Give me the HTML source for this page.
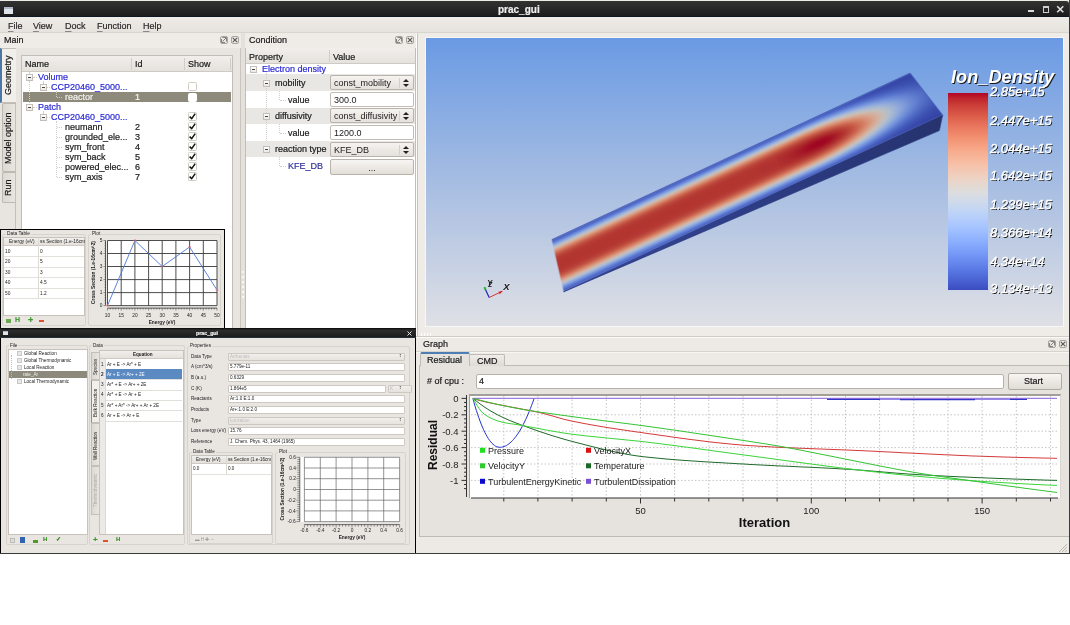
<!DOCTYPE html>
<html><head><meta charset="utf-8">
<style>
*{box-sizing:border-box;margin:0;padding:0}
html,body{width:1070px;height:625px;overflow:hidden;background:#fff;font-family:"Liberation Sans",sans-serif;font-size:9px;color:#1a1a1a}
.a{position:absolute}
.t{position:absolute;white-space:nowrap;line-height:10px;-webkit-text-stroke:0.2px currentColor}
#win{will-change:transform;left:0;top:0;width:1070px;height:554px;background:#edeae6;border-right:1px solid #3a3a3a;border-bottom:1px solid #3a3a3a;overflow:hidden}
#title{left:0;top:1px;width:1069px;height:16px;border-radius:0 3px 0 0;background:linear-gradient(#333,#1c1c1c);border-bottom:1px solid #0f1820}
#menu{left:0;top:17px;width:1069px;height:16px;background:linear-gradient(#efece8,#e6e2dd);border-bottom:1px solid #d8d4ce}
.menuitem{top:21px;color:#2a2a2a}
.u{text-decoration:underline;text-decoration-color:#888;text-underline-offset:1.5px}
.dockt{font-size:9px}
.blue{color:#2b2bd6}
.hdr{background:linear-gradient(#f1efec,#e5e1dc);border-bottom:1px solid #cfcac4}
.white{background:#fff}
.chk{position:absolute;width:9px;height:9px;background:#fff;border:1px solid #cfcbc5;border-radius:1.5px}
.exp{position:absolute;width:7px;height:7px;border:1px solid #a8a49d;background:linear-gradient(#fff,#ebe9e6)}
.exp:after{content:"";position:absolute;left:1px;top:2px;width:3px;height:1px;background:#222}
.dotv{position:absolute;width:1px;border-left:1px dotted #d2cec8}
.doth{position:absolute;height:1px;border-top:1px dotted #d2cec8}
.vt{transform-origin:0 0;transform:rotate(-90deg)}
.fl,.cl{width:8px;height:8px;border:1px solid #a9a49d;border-radius:2px;background:#ece9e5}
.exp{border-color:#c3bfb8!important}
.exp:after{background:#444!important}
.chk svg{position:absolute;left:-1px;top:-1px}
.combo,.inp,.btn{position:absolute;left:330px;width:84px;height:15px;border:1px solid #b9b3ab;border-radius:2px}
.combo{background:linear-gradient(#f5f3f0,#e5e1dc)}
.combo:before{content:"";position:absolute;right:13px;top:2px;width:1px;height:10px;background:#d4cfc8}
.ud{position:absolute;right:4px;top:3px;width:6px;height:8px}
.ud:before{content:"";position:absolute;left:0;top:0;border-left:3px solid transparent;border-right:3px solid transparent;border-bottom:3px solid #222}
.ud:after{content:"";position:absolute;left:0;top:5px;border-left:3px solid transparent;border-right:3px solid transparent;border-top:3px solid #222}
.fl svg,.cl svg{position:absolute;left:0;top:0}
.combo span,.inp span{position:absolute;left:3px;top:2px;line-height:10px;white-space:nowrap}
.inp{background:#fff;border-color:#c2bcb4}
.btn{background:linear-gradient(#f7f5f2,#e2ded8);height:16px}
.btn span{position:absolute;left:0;width:100%;text-align:center;top:3px;line-height:10px}
.arr{position:absolute;right:4px;width:0;height:0;border-left:3px solid transparent;border-right:3px solid transparent}
#face{position:absolute;left:0;top:0;width:1000px;height:100px;transform-origin:0 0;filter:blur(1.5px)}
#face i{position:absolute;top:0;height:100px;display:block}
.vtk{font-style:italic;color:#fff;text-shadow:1px 1px 0.6px #1a1a1a;-webkit-text-stroke:0.35px #fff}
.lab{left:990px;font-size:13px;line-height:14px}
.gd{stroke:#c4c4c4;stroke-width:1;stroke-dasharray:1.5 2}
.lg{font-family:"Liberation Sans";font-size:9px;fill:#222}
.tk{font-family:"Liberation Sans";font-size:9.5px;fill:#222}
.ax{font-family:"Liberation Sans";font-size:13px;font-weight:bold;fill:#111}
.sm{font-size:4.8px;font-family:"Liberation Sans";fill:#222;color:#222;-webkit-text-stroke:0}
.grp{border:1px solid #d6d2cc;border-radius:2px}
.xs{font-size:4.6px;line-height:7px;color:#222;-webkit-text-stroke:0}
.fic{width:5px;height:5px;background:#e8e8e8;border:0.5px solid #c8c8c8}
.vtab{left:91px;width:8px;background:linear-gradient(90deg,#dcd8d2,#e9e6e1);border:1px solid #c4bfb8;border-right:none}
</style></head><body>
<div id="win" class="a">
  <div id="title" class="a">
    <div class="a" style="left:4px;top:6px;width:9px;height:7px;background:#dfe3ea;border-top:2px solid #aeb8c8"></div>
    <div class="t" style="left:498px;top:3px;font-weight:bold;font-size:10px;color:#eee;line-height:12px">prac_gui</div>
    <div class="a" style="left:1028px;top:9px;width:6px;height:2px;background:#d8d8d8"></div>
    <div class="a" style="left:1042.5px;top:4.5px;width:6px;height:7px;border:1px solid #d0d0d0;border-top-width:2px"></div>
    <svg class="a" style="left:1056px;top:4px" width="9" height="9"><path d="M1.2,1.2 L7.3,7.3 M7.3,1.2 L1.2,7.3" stroke="#e0e0e0" stroke-width="1.6"/></svg>
  </div>
  <div id="menu" class="a"></div>
  <div class="t menuitem" style="left:8px"><span class="u">F</span>ile</div>
  <div class="t menuitem" style="left:33px"><span class="u">V</span>iew</div>
  <div class="t menuitem" style="left:65px"><span class="u">D</span>ock</div>
  <div class="t menuitem" style="left:97px"><span class="u">F</span>unction</div>
  <div class="t menuitem" style="left:143px"><span class="u">H</span>elp</div>

  <!-- MAIN DOCK -->
  <div class="a" style="left:0;top:33px;width:241px;height:15px;background:#efece8"></div>
  <div class="t" style="left:4px;top:35px">Main</div>
  <div class="a fl" style="left:220px;top:36px"><svg width="6" height="6"><path d="M1.5,0.5 h4 v4 M0.5,2 v3.5 h3.5 M1.5,4.5 L5,1" stroke="#777" stroke-width="0.9" fill="none"/></svg></div>
  <div class="a cl" style="left:231px;top:36px"><svg width="6" height="6"><path d="M0.8,0.8 L5.2,5.2 M5.2,0.8 L0.8,5.2" stroke="#555" stroke-width="1.1"/></svg></div>
  <div class="a" style="left:0;top:48px;width:241px;height:290px;background:#e8e5e0;border-right:1px solid #c9c4be"></div>
  <!-- tabs -->
  <div class="a" style="left:15px;top:48px;width:1px;height:290px;background:#c4bfb8"></div>
  <div class="a" style="left:2px;top:103px;width:13px;height:69px;background:linear-gradient(90deg,#dcd8d2,#e9e6e1);border:1px solid #bdb8b1;border-right:none;border-radius:2px 0 0 2px"></div>
  <div class="a" style="left:2px;top:172px;width:13px;height:31px;background:linear-gradient(90deg,#dcd8d2,#e9e6e1);border:1px solid #bdb8b1;border-right:none;border-radius:2px 0 0 2px"></div>
  <div class="a" style="left:0;top:48px;width:16px;height:55px;background:#f1efeb;border-left:2px solid #4a78a6;border-top:1px solid #c4bfb8;border-bottom:1px solid #c4bfb8"></div>
  <div class="t vt" style="left:3px;top:95px">Geometry</div>
  <div class="t vt" style="left:3px;top:164px">Model option</div>
  <div class="t vt" style="left:3px;top:196px">Run</div>
  <!-- tree -->
  <div class="a white" style="left:21px;top:55px;width:212px;height:290px;border:1px solid #c2bdb6"></div>
  <div class="a hdr" style="left:22px;top:56px;width:210px;height:16px"></div>
  <div class="a" style="left:131px;top:58px;width:1px;height:12px;background:#d2cdc7"></div>
  <div class="a" style="left:184px;top:58px;width:1px;height:12px;background:#d2cdc7"></div>
  <div class="t" style="left:25px;top:59px">Name</div>
  <div class="t" style="left:135px;top:59px">Id</div>
  <div class="t" style="left:188px;top:59px">Show</div><div class="a" style="left:230px;top:58px;width:1px;height:12px;background:#d2cdc7"></div>
  <div class="a" style="left:23px;top:92px;width:208px;height:10px;background:#8d8a7b"></div>
  <div class="t blue" style="left:38px;top:72px">Volume</div>
  <div class="t blue" style="left:51px;top:82px">CCP20460_5000...</div>
  <div class="t" style="left:65px;top:92px;color:#f4f4f0">reactor</div>
  <div class="t" style="left:135px;top:92px;color:#f4f4f0">1</div>
  <div class="t blue" style="left:38px;top:102px">Patch</div>
  <div class="t blue" style="left:51px;top:112px">CCP20460_5000...</div>
  <div class="t" style="left:65px;top:122px">neumann</div>
  <div class="t" style="left:135px;top:122px">2</div>
  <div class="t" style="left:65px;top:132px">grounded_ele...</div>
  <div class="t" style="left:135px;top:132px">3</div>
  <div class="t" style="left:65px;top:142px">sym_front</div>
  <div class="t" style="left:135px;top:142px">4</div>
  <div class="t" style="left:65px;top:152px">sym_back</div>
  <div class="t" style="left:135px;top:152px">5</div>
  <div class="t" style="left:65px;top:162px">powered_elec...</div>
  <div class="t" style="left:135px;top:162px">6</div>
  <div class="t" style="left:65px;top:172px">sym_axis</div>
  <div class="t" style="left:135px;top:172px">7</div>
  <div class="dotv" style="left:29px;top:72px;height:2px"></div>
  <div class="dotv" style="left:29px;top:81px;height:22px"></div>
  <div class="doth" style="left:33px;top:77px;width:4px"></div>
  <div class="doth" style="left:33px;top:107px;width:4px"></div>
  <div class="dotv" style="left:43px;top:81px;height:2px"></div>
  <div class="doth" style="left:47px;top:87px;width:3px"></div>
  <div class="dotv" style="left:43px;top:111px;height:2px"></div>
  <div class="doth" style="left:47px;top:117px;width:3px"></div>
  <div class="dotv" style="left:56px;top:91px;height:6px"></div>
  <div class="doth" style="left:57px;top:97px;width:5px"></div>
  <div class="dotv" style="left:56px;top:121px;height:56px"></div>
  <div class="doth" style="left:57px;top:127px;width:5px"></div>
  <div class="doth" style="left:57px;top:137px;width:5px"></div>
  <div class="doth" style="left:57px;top:147px;width:5px"></div>
  <div class="doth" style="left:57px;top:157px;width:5px"></div>
  <div class="doth" style="left:57px;top:167px;width:5px"></div>
  <div class="doth" style="left:57px;top:177px;width:5px"></div>
  <div class="exp" style="left:26px;top:73.5px"></div>
  <div class="exp" style="left:40px;top:83.5px"></div>
  <div class="exp" style="left:26px;top:103.5px"></div>
  <div class="exp" style="left:40px;top:113.5px"></div>
  <div class="chk" style="left:188px;top:82px"></div>
  <div class="chk" style="left:188px;top:92.5px;border-color:#fff"></div>
  <div class="chk ck" style="left:188px;top:112px"><svg width="9" height="9"><path d="M1.6,4.6 L3.7,6.6 L7.2,1.6" stroke="#111" stroke-width="1.5" fill="none"/></svg></div>
  <div class="chk ck" style="left:188px;top:122px"><svg width="9" height="9"><path d="M1.6,4.6 L3.7,6.6 L7.2,1.6" stroke="#111" stroke-width="1.5" fill="none"/></svg></div>
  <div class="chk ck" style="left:188px;top:132px"><svg width="9" height="9"><path d="M1.6,4.6 L3.7,6.6 L7.2,1.6" stroke="#111" stroke-width="1.5" fill="none"/></svg></div>
  <div class="chk ck" style="left:188px;top:142px"><svg width="9" height="9"><path d="M1.6,4.6 L3.7,6.6 L7.2,1.6" stroke="#111" stroke-width="1.5" fill="none"/></svg></div>
  <div class="chk ck" style="left:188px;top:152px"><svg width="9" height="9"><path d="M1.6,4.6 L3.7,6.6 L7.2,1.6" stroke="#111" stroke-width="1.5" fill="none"/></svg></div>
  <div class="chk ck" style="left:188px;top:162px"><svg width="9" height="9"><path d="M1.6,4.6 L3.7,6.6 L7.2,1.6" stroke="#111" stroke-width="1.5" fill="none"/></svg></div>
  <div class="chk ck" style="left:188px;top:172px"><svg width="9" height="9"><path d="M1.6,4.6 L3.7,6.6 L7.2,1.6" stroke="#111" stroke-width="1.5" fill="none"/></svg></div>

  <!-- CONDITION DOCK -->
  <div class="a" style="left:241px;top:33px;width:4px;height:305px;background:#e4e0db"></div><div class="a" style="left:242px;top:271px;width:1.5px;height:2px;background:#f8f7f5"></div><div class="a" style="left:242px;top:276px;width:1.5px;height:2px;background:#f8f7f5"></div><div class="a" style="left:242px;top:281px;width:1.5px;height:2px;background:#f8f7f5"></div><div class="a" style="left:242px;top:286px;width:1.5px;height:2px;background:#f8f7f5"></div><div class="a" style="left:242px;top:291px;width:1.5px;height:2px;background:#f8f7f5"></div><div class="a" style="left:242px;top:296px;width:1.5px;height:2px;background:#f8f7f5"></div>
  <div class="a" style="left:245px;top:33px;width:171px;height:15px;background:#efece8"></div>
  <div class="t" style="left:249px;top:35px">Condition</div>
  <div class="a fl" style="left:395px;top:36px"><svg width="6" height="6"><path d="M1.5,0.5 h4 v4 M0.5,2 v3.5 h3.5 M1.5,4.5 L5,1" stroke="#777" stroke-width="0.9" fill="none"/></svg></div>
  <div class="a cl" style="left:406px;top:36px"><svg width="6" height="6"><path d="M0.8,0.8 L5.2,5.2 M5.2,0.8 L0.8,5.2" stroke="#555" stroke-width="1.1"/></svg></div>
  <div class="a white" style="left:245px;top:48px;width:171px;height:290px;border-left:1px solid #c2bdb6;border-right:1px solid #c2bdb6"></div>
  <div class="a hdr" style="left:246px;top:48px;width:169px;height:16px"></div>
  <div class="a" style="left:329px;top:50px;width:1px;height:12px;background:#d2cdc7"></div>
  <div class="t" style="left:249px;top:52px">Property</div>
  <div class="t" style="left:333px;top:52px">Value</div>
  <div class="a" style="left:246px;top:74px;width:169px;height:17px;background:#e9e7e4"></div>
  <div class="a" style="left:246px;top:108px;width:169px;height:16px;background:#e9e7e4"></div>
  <div class="a" style="left:246px;top:141px;width:169px;height:16px;background:#e9e7e4"></div>
  <div class="dotv" style="left:266px;top:73px;height:68px"></div>
  <div class="dotv" style="left:279px;top:91px;height:9px"></div>
  <div class="doth" style="left:280px;top:100px;width:6px"></div>
  <div class="dotv" style="left:279px;top:124px;height:9px"></div>
  <div class="doth" style="left:280px;top:133px;width:6px"></div>
  <div class="dotv" style="left:279px;top:157px;height:9px"></div>
  <div class="doth" style="left:280px;top:166px;width:6px"></div>
  <div class="exp" style="left:250px;top:66px"></div>
  <div class="exp" style="left:263px;top:80px"></div>
  <div class="exp" style="left:263px;top:113px"></div>
  <div class="exp" style="left:263px;top:146px"></div>
  <div class="t blue" style="left:262px;top:64px">Electron density</div>
  <div class="t" style="left:275px;top:78px">mobility</div>
  <div class="t" style="left:288px;top:95px">value</div>
  <div class="t" style="left:275px;top:111px">diffusivity</div>
  <div class="t" style="left:288px;top:128px">value</div>
  <div class="t" style="left:275px;top:144px">reaction type</div>
  <div class="t" style="left:288px;top:161px;color:#33339a">KFE_DB</div>
  <div class="combo" style="top:75px"><span>const_mobility</span><b class="ud"></b></div>
  <div class="inp" style="top:92px"><span>300.0</span></div>
  <div class="combo" style="top:108px"><span>const_diffusivity</span><b class="ud"></b></div>
  <div class="inp" style="top:125px"><span>1200.0</span></div>
  <div class="combo" style="top:142px"><span>KFE_DB</span><b class="ud"></b></div>
  <div class="btn" style="top:159px"><span>...</span></div>

  <!-- 3D VIEW -->
  <div class="a" style="left:416px;top:33px;width:653px;height:304px;background:#efece8;border-left:1px solid #d0cbc5"></div>
  <div class="a" style="left:416px;top:33px;width:1px;height:304px;background:#fdfcfb"></div><div class="a" style="left:417px;top:33px;width:1px;height:304px;background:#c9c4bd"></div><div class="a" style="left:425px;top:37px;width:639px;height:290px;background:#f7f7f7"></div>
  <div class="a" style="left:426px;top:38px;width:637px;height:288px;background:linear-gradient(#6a9ae4,#a6bde2 50%,#dfe0e5)"></div>
  <svg class="a" style="left:0;top:0" width="1070" height="625">
    <defs><linearGradient id="sideg" x1="0" y1="0" x2="1" y2="0"><stop offset="0" stop-color="#34469a"/><stop offset="1" stop-color="#26336f"/></linearGradient></defs>
    
  </svg>
  <div id="face" style="transform:matrix3d(0.35853380,-0.16646505,0,0.0000004768,-0.19067928,0.35874907,0,-0.0005493690,0,0,1,0,551.800000,239.800000,0,1.00000000)"><i style="left:0.00px;width:50.80px;background:linear-gradient(#3f54b7 0%,#4861c2 2.5%,#5672ce 5%,#6a88d9 7.5%,#819fe0 10%,#9db4dd 12.5%,#b7c0cf 15%,#ccbcb4 17.5%,#d8ab96 20%,#d99579 22.5%,#d47e63 25%,#cc6952 27.5%,#c45746 30%,#bd4a3d 32.5%,#b94137 35%,#b53b34 37.5%,#b43732 40%,#b33631 42.5%,#b23530 45%,#b23530 47.5%,#b23530 50%,#b23530 52.5%,#b23530 55%,#b33631 57.5%,#b43732 60%,#b53b34 62.5%,#b94137 65%,#bd4a3d 67.5%,#c45746 70%,#cc6952 72.5%,#d47e63 75%,#d99579 77.5%,#d8ab96 80%,#ccbcb4 82.5%,#b7c0cf 85%,#9db4dd 87.5%,#819fe0 90%,#6a88d9 92.5%,#5672ce 95%,#4861c2 97.5%,#3f54b7 100%)"></i><i style="left:50.00px;width:50.80px;background:linear-gradient(#3f54b7 0%,#4861c2 2.5%,#5672ce 5%,#6a88d9 7.5%,#819fe0 10%,#9db4dd 12.5%,#b7c0cf 15%,#ccbcb4 17.5%,#d8ab96 20%,#d99579 22.5%,#d47e63 25%,#cc6952 27.5%,#c45746 30%,#bd4a3d 32.5%,#b94137 35%,#b53b34 37.5%,#b43732 40%,#b33631 42.5%,#b23530 45%,#b23530 47.5%,#b23530 50%,#b23530 52.5%,#b23530 55%,#b33631 57.5%,#b43732 60%,#b53b34 62.5%,#b94137 65%,#bd4a3d 67.5%,#c45746 70%,#cc6952 72.5%,#d47e63 75%,#d99579 77.5%,#d8ab96 80%,#ccbcb4 82.5%,#b7c0cf 85%,#9db4dd 87.5%,#819fe0 90%,#6a88d9 92.5%,#5672ce 95%,#4861c2 97.5%,#3f54b7 100%)"></i><i style="left:100.00px;width:50.80px;background:linear-gradient(#3f54b7 0%,#4861c2 2.5%,#5672ce 5%,#6a88d9 7.5%,#819fe0 10%,#9db4dd 12.5%,#b7c0cf 15%,#ccbcb4 17.5%,#d8ab96 20%,#d99579 22.5%,#d47e63 25%,#cc6952 27.5%,#c45746 30%,#bd4a3d 32.5%,#b94137 35%,#b53b34 37.5%,#b43732 40%,#b33631 42.5%,#b23530 45%,#b23530 47.5%,#b23530 50%,#b23530 52.5%,#b23530 55%,#b33631 57.5%,#b43732 60%,#b53b34 62.5%,#b94137 65%,#bd4a3d 67.5%,#c45746 70%,#cc6952 72.5%,#d47e63 75%,#d99579 77.5%,#d8ab96 80%,#ccbcb4 82.5%,#b7c0cf 85%,#9db4dd 87.5%,#819fe0 90%,#6a88d9 92.5%,#5672ce 95%,#4861c2 97.5%,#3f54b7 100%)"></i><i style="left:150.00px;width:50.80px;background:linear-gradient(#3f54b7 0%,#4861c2 2.5%,#5672ce 5%,#6a88d9 7.5%,#819fe0 10%,#9db4dd 12.5%,#b7c0cf 15%,#ccbcb4 17.5%,#d8ab96 20%,#d99579 22.5%,#d47e63 25%,#cc6952 27.5%,#c45746 30%,#bd4a3d 32.5%,#b94137 35%,#b53b34 37.5%,#b43732 40%,#b33631 42.5%,#b23530 45%,#b23530 47.5%,#b23530 50%,#b23530 52.5%,#b23530 55%,#b33631 57.5%,#b43732 60%,#b53b34 62.5%,#b94137 65%,#bd4a3d 67.5%,#c45746 70%,#cc6952 72.5%,#d47e63 75%,#d99579 77.5%,#d8ab96 80%,#ccbcb4 82.5%,#b7c0cf 85%,#9db4dd 87.5%,#819fe0 90%,#6a88d9 92.5%,#5672ce 95%,#4861c2 97.5%,#3f54b7 100%)"></i><i style="left:200.00px;width:50.80px;background:linear-gradient(#3f54b7 0%,#4861c2 2.5%,#5672ce 5%,#6a88d9 7.5%,#819fe0 10%,#9db4dd 12.5%,#b7c0cf 15%,#ccbcb4 17.5%,#d8ab96 20%,#d99579 22.5%,#d47e63 25%,#cc6952 27.5%,#c45746 30%,#bd4a3d 32.5%,#b94137 35%,#b53b34 37.5%,#b43732 40%,#b33631 42.5%,#b23530 45%,#b23530 47.5%,#b23530 50%,#b23530 52.5%,#b23530 55%,#b33631 57.5%,#b43732 60%,#b53b34 62.5%,#b94137 65%,#bd4a3d 67.5%,#c45746 70%,#cc6952 72.5%,#d47e63 75%,#d99579 77.5%,#d8ab96 80%,#ccbcb4 82.5%,#b7c0cf 85%,#9db4dd 87.5%,#819fe0 90%,#6a88d9 92.5%,#5672ce 95%,#4861c2 97.5%,#3f54b7 100%)"></i><i style="left:250.00px;width:50.80px;background:linear-gradient(#3f54b7 0%,#4861c2 2.5%,#5672ce 5%,#6a88d9 7.5%,#819fe0 10%,#9db4dd 12.5%,#b7c0cf 15%,#ccbcb4 17.5%,#d8ab96 20%,#d99579 22.5%,#d47e63 25%,#cc6952 27.5%,#c45746 30%,#bd4a3d 32.5%,#b94137 35%,#b53b34 37.5%,#b43732 40%,#b33631 42.5%,#b23530 45%,#b23530 47.5%,#b23530 50%,#b23530 52.5%,#b23530 55%,#b33631 57.5%,#b43732 60%,#b53b34 62.5%,#b94137 65%,#bd4a3d 67.5%,#c45746 70%,#cc6952 72.5%,#d47e63 75%,#d99579 77.5%,#d8ab96 80%,#ccbcb4 82.5%,#b7c0cf 85%,#9db4dd 87.5%,#819fe0 90%,#6a88d9 92.5%,#5672ce 95%,#4861c2 97.5%,#3f54b7 100%)"></i><i style="left:300.00px;width:50.80px;background:linear-gradient(#3f54b7 0%,#4861c2 2.5%,#5672ce 5%,#6a88d9 7.5%,#819fe0 10%,#9db4dd 12.5%,#b7c0cf 15%,#ccbcb4 17.5%,#d8ab96 20%,#d99579 22.5%,#d47e63 25%,#cc6952 27.5%,#c45746 30%,#bd4a3d 32.5%,#b94137 35%,#b53b34 37.5%,#b43732 40%,#b33631 42.5%,#b23530 45%,#b23530 47.5%,#b23530 50%,#b23530 52.5%,#b23530 55%,#b33631 57.5%,#b43732 60%,#b53b34 62.5%,#b94137 65%,#bd4a3d 67.5%,#c45746 70%,#cc6952 72.5%,#d47e63 75%,#d99579 77.5%,#d8ab96 80%,#ccbcb4 82.5%,#b7c0cf 85%,#9db4dd 87.5%,#819fe0 90%,#6a88d9 92.5%,#5672ce 95%,#4861c2 97.5%,#3f54b7 100%)"></i><i style="left:350.00px;width:50.80px;background:linear-gradient(#3f54b7 0%,#4861c2 2.5%,#5672ce 5%,#6a88d9 7.5%,#819fe0 10%,#9db4dd 12.5%,#b7c0cf 15%,#ccbcb4 17.5%,#d8ab96 20%,#d99579 22.5%,#d47e63 25%,#cc6952 27.5%,#c45746 30%,#bd4a3d 32.5%,#b94137 35%,#b53b34 37.5%,#b43732 40%,#b33631 42.5%,#b23530 45%,#b23530 47.5%,#b23530 50%,#b23530 52.5%,#b23530 55%,#b33631 57.5%,#b43732 60%,#b53b34 62.5%,#b94137 65%,#bd4a3d 67.5%,#c45746 70%,#cc6952 72.5%,#d47e63 75%,#d99579 77.5%,#d8ab96 80%,#ccbcb4 82.5%,#b7c0cf 85%,#9db4dd 87.5%,#819fe0 90%,#6a88d9 92.5%,#5672ce 95%,#4861c2 97.5%,#3f54b7 100%)"></i><i style="left:400.00px;width:50.80px;background:linear-gradient(#3f54b7 0%,#4861c2 2.5%,#5672ce 5%,#6a88d9 7.5%,#819fe0 10%,#9db4dd 12.5%,#b7c0cf 15%,#ccbcb4 17.5%,#d8ab96 20%,#d99579 22.5%,#d47e63 25%,#cc6952 27.5%,#c45746 30%,#bd4a3d 32.5%,#b94137 35%,#b53b34 37.5%,#b43732 40%,#b33631 42.5%,#b23530 45%,#b23530 47.5%,#b23530 50%,#b23530 52.5%,#b23530 55%,#b33631 57.5%,#b43732 60%,#b53b34 62.5%,#b94137 65%,#bd4a3d 67.5%,#c45746 70%,#cc6952 72.5%,#d47e63 75%,#d99579 77.5%,#d8ab96 80%,#ccbcb4 82.5%,#b7c0cf 85%,#9db4dd 87.5%,#819fe0 90%,#6a88d9 92.5%,#5672ce 95%,#4861c2 97.5%,#3f54b7 100%)"></i><i style="left:450.00px;width:50.80px;background:linear-gradient(#3f54b7 0%,#4861c2 2.5%,#5672ce 5%,#6a88d9 7.5%,#819fe0 10%,#9db4dd 12.5%,#b7c0cf 15%,#ccbcb4 17.5%,#d8ab96 20%,#d99579 22.5%,#d47e63 25%,#cc6952 27.5%,#c45746 30%,#bd4a3d 32.5%,#b94137 35%,#b53b34 37.5%,#b43732 40%,#b33631 42.5%,#b23530 45%,#b23530 47.5%,#b23530 50%,#b23530 52.5%,#b23530 55%,#b33631 57.5%,#b43732 60%,#b53b34 62.5%,#b94137 65%,#bd4a3d 67.5%,#c45746 70%,#cc6952 72.5%,#d47e63 75%,#d99579 77.5%,#d8ab96 80%,#ccbcb4 82.5%,#b7c0cf 85%,#9db4dd 87.5%,#819fe0 90%,#6a88d9 92.5%,#5672ce 95%,#4861c2 97.5%,#3f54b7 100%)"></i><i style="left:500.00px;width:50.80px;background:linear-gradient(#3f54b7 0%,#4861c2 2.5%,#5672ce 5%,#6a88d9 7.5%,#819fe0 10%,#9db4dd 12.5%,#b7c0cf 15%,#ccbcb4 17.5%,#d8ab96 20%,#d99579 22.5%,#d47e63 25%,#cc6952 27.5%,#c45746 30%,#bd4a3d 32.5%,#b84137 35%,#b53b34 37.5%,#b43732 40%,#b23631 42.5%,#b23530 45%,#b23530 47.5%,#b23530 50%,#b23530 52.5%,#b23530 55%,#b23631 57.5%,#b43732 60%,#b53b34 62.5%,#b84137 65%,#bd4a3d 67.5%,#c45746 70%,#cc6952 72.5%,#d47e63 75%,#d99579 77.5%,#d8ab96 80%,#ccbcb4 82.5%,#b7c0cf 85%,#9db4dd 87.5%,#819fe0 90%,#6a88d9 92.5%,#5672ce 95%,#4861c2 97.5%,#3f54b7 100%)"></i><i style="left:550.00px;width:50.80px;background:linear-gradient(#3f54b7 0%,#4861c2 2.5%,#5672ce 5%,#6a88d9 7.5%,#819fe0 10%,#9db4dd 12.5%,#b7c0cf 15%,#ccbcb4 17.5%,#d8ab96 20%,#d99579 22.5%,#d47e63 25%,#cc6952 27.5%,#c45746 30%,#bd4a3d 32.5%,#b84037 35%,#b43933 37.5%,#b33631 40%,#b13330 42.5%,#b13230 45%,#b03230 47.5%,#b03130 50%,#b03230 52.5%,#b13230 55%,#b13330 57.5%,#b33631 60%,#b43933 62.5%,#b84037 65%,#bd4a3d 67.5%,#c45746 70%,#cc6952 72.5%,#d47e63 75%,#d99579 77.5%,#d8ab96 80%,#ccbcb4 82.5%,#b7c0cf 85%,#9db4dd 87.5%,#819fe0 90%,#6a88d9 92.5%,#5672ce 95%,#4861c2 97.5%,#3f54b7 100%)"></i><i style="left:600.00px;width:8.80px;background:linear-gradient(#3f54b7 0%,#4861c2 2.5%,#5672ce 5%,#6a88d9 7.5%,#819fe0 10%,#9db4dd 12.5%,#b7c0cf 15%,#ccbcb4 17.5%,#d8ab96 20%,#d99579 22.5%,#d47e63 25%,#cc6852 27.5%,#c45645 30%,#bd493c 32.5%,#b73e36 35%,#b43732 37.5%,#b13330 40%,#af302f 42.5%,#ae2e2e 45%,#ae2d2e 47.5%,#ae2d2e 50%,#ae2d2e 52.5%,#ae2e2e 55%,#af302f 57.5%,#b13330 60%,#b43732 62.5%,#b73e36 65%,#bd493c 67.5%,#c45645 70%,#cc6852 72.5%,#d47e63 75%,#d99579 77.5%,#d8ab96 80%,#ccbcb4 82.5%,#b7c0cf 85%,#9db4dd 87.5%,#819fe0 90%,#6a88d9 92.5%,#5672ce 95%,#4861c2 97.5%,#3f54b7 100%)"></i><i style="left:608.00px;width:8.80px;background:linear-gradient(#3f54b7 0%,#4861c2 2.5%,#5672ce 5%,#6a88d9 7.5%,#819fe0 10%,#9db4dd 12.5%,#b7c0cf 15%,#ccbcb4 17.5%,#d8ab96 20%,#d99579 22.5%,#d47e63 25%,#cc6852 27.5%,#c45645 30%,#bc483c 32.5%,#b73e36 35%,#b33731 37.5%,#b03130 40%,#ae2e2e 42.5%,#ad2c2d 45%,#ad2b2d 47.5%,#ac2b2d 50%,#ad2b2d 52.5%,#ad2c2d 55%,#ae2e2e 57.5%,#b03130 60%,#b33731 62.5%,#b73e36 65%,#bc483c 67.5%,#c45645 70%,#cc6852 72.5%,#d47e63 75%,#d99579 77.5%,#d8ab96 80%,#ccbcb4 82.5%,#b7c0cf 85%,#9db4dd 87.5%,#819fe0 90%,#6a88d9 92.5%,#5672ce 95%,#4861c2 97.5%,#3f54b7 100%)"></i><i style="left:616.00px;width:8.80px;background:linear-gradient(#3f54b7 0%,#4861c2 2.5%,#5672ce 5%,#6a88d9 7.5%,#819fe0 10%,#9db4dd 12.5%,#b7c0cf 15%,#ccbcb4 17.5%,#d8ab96 20%,#d99579 22.5%,#d47e63 25%,#cc6852 27.5%,#c45545 30%,#bc483b 32.5%,#b63e35 35%,#b33631 37.5%,#af302f 40%,#ad2c2d 42.5%,#ac2a2c 45%,#ac292c 47.5%,#ac282c 50%,#ac292c 52.5%,#ac2a2c 55%,#ad2c2d 57.5%,#af302f 60%,#b33631 62.5%,#b63e35 65%,#bc483b 67.5%,#c45545 70%,#cc6852 72.5%,#d47e63 75%,#d99579 77.5%,#d8ab96 80%,#ccbcb4 82.5%,#b7c0cf 85%,#9db4dd 87.5%,#819fe0 90%,#6a88d9 92.5%,#5672ce 95%,#4861c2 97.5%,#3f54b7 100%)"></i><i style="left:624.00px;width:8.80px;background:linear-gradient(#3f54b7 0%,#4861c2 2.5%,#5672ce 5%,#6a88d9 7.5%,#819fe0 10%,#9db4dd 12.5%,#b7c0cf 15%,#ccbcb4 17.5%,#d8ab96 20%,#d99579 22.5%,#d47e63 25%,#cc6851 27.5%,#c35545 30%,#bc473b 32.5%,#b63d35 35%,#b23530 37.5%,#ae2f2e 40%,#ac2a2c 42.5%,#ac282b 45%,#ab272b 47.5%,#ab272a 50%,#ab272b 52.5%,#ac282b 55%,#ac2a2c 57.5%,#ae2f2e 60%,#b23530 62.5%,#b63d35 65%,#bc473b 67.5%,#c35545 70%,#cc6851 72.5%,#d47e63 75%,#d99579 77.5%,#d8ab96 80%,#ccbcb4 82.5%,#b7c0cf 85%,#9db4dd 87.5%,#819fe0 90%,#6a88d9 92.5%,#5672ce 95%,#4861c2 97.5%,#3f54b7 100%)"></i><i style="left:632.00px;width:8.80px;background:linear-gradient(#3f54b7 0%,#4861c2 2.5%,#5672ce 5%,#6a88d9 7.5%,#819fe0 10%,#9db4dd 12.5%,#b7c0cf 15%,#ccbcb4 17.5%,#d8ab96 20%,#d99579 22.5%,#d47d63 25%,#cc6851 27.5%,#c35545 30%,#bb473b 32.5%,#b53c34 35%,#b13330 37.5%,#ae2d2e 40%,#ac282b 42.5%,#aa262a 45%,#aa242a 47.5%,#a92429 50%,#aa242a 52.5%,#aa262a 55%,#ac282b 57.5%,#ae2d2e 60%,#b13330 62.5%,#b53c34 65%,#bb473b 67.5%,#c35545 70%,#cc6851 72.5%,#d47d63 75%,#d99579 77.5%,#d8ab96 80%,#ccbcb4 82.5%,#b7c0cf 85%,#9db4dd 87.5%,#819fe0 90%,#6a88d9 92.5%,#5672ce 95%,#4861c2 97.5%,#3f54b7 100%)"></i><i style="left:640.00px;width:8.80px;background:linear-gradient(#3f54b7 0%,#4861c2 2.5%,#5672ce 5%,#6a88d9 7.5%,#819fe0 10%,#9db4dd 12.5%,#b7c0cf 15%,#ccbcb4 17.5%,#d8ab96 20%,#d99579 22.5%,#d47d63 25%,#cc6851 27.5%,#c35444 30%,#bb463a 32.5%,#b53b34 35%,#b03230 37.5%,#ad2b2d 40%,#ab272a 42.5%,#a92329 45%,#a82128 47.5%,#a82028 50%,#a82128 52.5%,#a92329 55%,#ab272a 57.5%,#ad2b2d 60%,#b03230 62.5%,#b53b34 65%,#bb463a 67.5%,#c35444 70%,#cc6851 72.5%,#d47d63 75%,#d99579 77.5%,#d8ab96 80%,#ccbcb4 82.5%,#b7c0cf 85%,#9db4dd 87.5%,#819fe0 90%,#6a88d9 92.5%,#5672ce 95%,#4861c2 97.5%,#3f54b7 100%)"></i><i style="left:648.00px;width:8.80px;background:linear-gradient(#3f54b7 0%,#4861c2 2.5%,#5672ce 5%,#6a88d9 7.5%,#819fe0 10%,#9db4dd 12.5%,#b7c0cf 15%,#ccbcb4 17.5%,#d8ab96 20%,#d99579 22.5%,#d47d63 25%,#cc6751 27.5%,#c35444 30%,#bb463a 32.5%,#b43a33 35%,#b0302f 37.5%,#ac292c 40%,#aa2429 42.5%,#a82028 45%,#a61c28 47.5%,#a61b28 50%,#a61c28 52.5%,#a82028 55%,#aa2429 57.5%,#ac292c 60%,#b0302f 62.5%,#b43a33 65%,#bb463a 67.5%,#c35444 70%,#cc6751 72.5%,#d47d63 75%,#d99579 77.5%,#d8ab96 80%,#ccbcb4 82.5%,#b7c0cf 85%,#9db4dd 87.5%,#819fe0 90%,#6a88d9 92.5%,#5672ce 95%,#4861c2 97.5%,#3f54b7 100%)"></i><i style="left:656.00px;width:8.80px;background:linear-gradient(#3f54b7 0%,#4861c2 2.5%,#5672ce 5%,#6a88d9 7.5%,#819fe0 10%,#9db4dd 12.5%,#b7c0cf 15%,#ccbcb4 17.5%,#d8ab96 20%,#d99579 22.5%,#d47d63 25%,#cb6751 27.5%,#c35444 30%,#bb4639 32.5%,#b43933 35%,#af302f 37.5%,#ab282b 40%,#a82128 42.5%,#a61b28 45%,#a51827 47.5%,#a51726 50%,#a51827 52.5%,#a61b28 55%,#a82128 57.5%,#ab282b 60%,#af302f 62.5%,#b43933 65%,#bb4639 67.5%,#c35444 70%,#cb6751 72.5%,#d47d63 75%,#d99579 77.5%,#d8ab96 80%,#ccbcb4 82.5%,#b7c0cf 85%,#9db4dd 87.5%,#819fe0 90%,#6a88d9 92.5%,#5672ce 95%,#4861c2 97.5%,#3f54b7 100%)"></i><i style="left:664.00px;width:8.80px;background:linear-gradient(#3f54b7 0%,#4861c2 2.5%,#5672ce 5%,#6a88d9 7.5%,#819fe0 10%,#9db4dd 12.5%,#b7c0cf 15%,#ccbcb4 17.5%,#d8ab96 20%,#d99579 22.5%,#d47d63 25%,#cb6751 27.5%,#c35444 30%,#bb4539 32.5%,#b43832 35%,#ae2e2e 37.5%,#aa262a 40%,#a71e28 42.5%,#a51727 45%,#a41325 47.5%,#a31225 50%,#a41325 52.5%,#a51727 55%,#a71e28 57.5%,#aa262a 60%,#ae2e2e 62.5%,#b43832 65%,#bb4539 67.5%,#c35444 70%,#cb6751 72.5%,#d47d63 75%,#d99579 77.5%,#d8ab96 80%,#ccbcb4 82.5%,#b7c0cf 85%,#9db4dd 87.5%,#819fe0 90%,#6a88d9 92.5%,#5672ce 95%,#4861c2 97.5%,#3f54b7 100%)"></i><i style="left:672.00px;width:8.80px;background:linear-gradient(#3f54b7 0%,#4861c2 2.5%,#5672ce 5%,#6a88d9 7.5%,#819fe0 10%,#9db4dd 12.5%,#b7c0cf 15%,#ccbcb4 17.5%,#d8ab96 20%,#d99579 22.5%,#d47d63 25%,#cb6751 27.5%,#c25443 30%,#bb4539 32.5%,#b43832 35%,#ad2d2d 37.5%,#aa2429 40%,#a61a28 42.5%,#a41326 45%,#a20f24 47.5%,#a20e24 50%,#a20f24 52.5%,#a41326 55%,#a61a28 57.5%,#aa2429 60%,#ad2d2d 62.5%,#b43832 65%,#bb4539 67.5%,#c25443 70%,#cb6751 72.5%,#d47d63 75%,#d99579 77.5%,#d8ab96 80%,#ccbcb4 82.5%,#b7c0cf 85%,#9db4dd 87.5%,#819fe0 90%,#6a88d9 92.5%,#5672ce 95%,#4861c2 97.5%,#3f54b7 100%)"></i><i style="left:680.00px;width:8.80px;background:linear-gradient(#3f54b8 0%,#4862c2 2.5%,#5773ce 5%,#6a88d9 7.5%,#819fe0 10%,#9db4dd 12.5%,#b7c0cf 15%,#ccbcb4 17.5%,#d8ab96 20%,#d99579 22.5%,#d47d63 25%,#cb6751 27.5%,#c35443 30%,#bb4539 32.5%,#b43732 35%,#ad2c2d 37.5%,#a92229 40%,#a51827 42.5%,#a31125 45%,#a10b23 47.5%,#a10b23 50%,#a10b23 52.5%,#a31125 55%,#a51827 57.5%,#a92229 60%,#ad2c2d 62.5%,#b43732 65%,#bb4539 67.5%,#c35443 70%,#cb6751 72.5%,#d47d63 75%,#d99579 77.5%,#d8ab96 80%,#ccbcb4 82.5%,#b7c0cf 85%,#9db4dd 87.5%,#819fe0 90%,#6a88d9 92.5%,#5773ce 95%,#4862c2 97.5%,#3f54b8 100%)"></i><i style="left:688.00px;width:8.80px;background:linear-gradient(#3f54b8 0%,#4862c2 2.5%,#5773cf 5%,#6a88d9 7.5%,#819fe0 10%,#9db4de 12.5%,#b6c0cf 15%,#cbbdb5 17.5%,#d8ac97 20%,#d9967b 22.5%,#d57f64 25%,#cc6952 27.5%,#c35444 30%,#bb4639 32.5%,#b43732 35%,#ad2b2d 37.5%,#a82128 40%,#a51626 42.5%,#a20e24 45%,#a00923 47.5%,#9f0722 50%,#a00923 52.5%,#a20e24 55%,#a51626 57.5%,#a82128 60%,#ad2b2d 62.5%,#b43732 65%,#bb4639 67.5%,#c35444 70%,#cc6952 72.5%,#d57f64 75%,#d9967b 77.5%,#d8ac97 80%,#cbbdb5 82.5%,#b6c0cf 85%,#9db4de 87.5%,#819fe0 90%,#6a88d9 92.5%,#5773cf 95%,#4862c2 97.5%,#3f54b8 100%)"></i><i style="left:696.00px;width:8.80px;background:linear-gradient(#3f55b8 0%,#4962c2 2.5%,#5773cf 5%,#6a88d9 7.5%,#819fe0 10%,#9cb3de 12.5%,#b5bfd1 15%,#cabdb7 17.5%,#d8ad99 20%,#d9977d 22.5%,#d58066 25%,#cd6a53 27.5%,#c45645 30%,#bb463a 32.5%,#b43832 35%,#ad2c2d 37.5%,#a82128 40%,#a51526 42.5%,#a10c23 45%,#9f0722 47.5%,#9f0521 50%,#9f0722 52.5%,#a10c23 55%,#a51526 57.5%,#a82128 60%,#ad2c2d 62.5%,#b43832 65%,#bb463a 67.5%,#c45645 70%,#cd6a53 72.5%,#d58066 75%,#d9977d 77.5%,#d8ad99 80%,#cabdb7 82.5%,#b5bfd1 85%,#9cb3de 87.5%,#819fe0 90%,#6a88d9 92.5%,#5773cf 95%,#4962c2 97.5%,#3f55b8 100%)"></i><i style="left:704.00px;width:8.80px;background:linear-gradient(#3f55b8 0%,#4962c2 2.5%,#5773ce 5%,#6988d9 7.5%,#809ee0 10%,#9ab2df 12.5%,#b4bfd1 15%,#c9beb9 17.5%,#d7af9c 20%,#d99a80 22.5%,#d68368 25%,#ce6d55 27.5%,#c55946 30%,#bc483b 32.5%,#b43a33 35%,#ad2d2d 37.5%,#a82129 40%,#a41426 42.5%,#a10b23 45%,#9f0622 47.5%,#9e0421 50%,#9f0622 52.5%,#a10b23 55%,#a41426 57.5%,#a82129 60%,#ad2d2d 62.5%,#b43a33 65%,#bc483b 67.5%,#c55946 70%,#ce6d55 72.5%,#d68368 75%,#d99a80 77.5%,#d7af9c 80%,#c9beb9 82.5%,#b4bfd1 85%,#9ab2df 87.5%,#809ee0 90%,#6988d9 92.5%,#5773ce 95%,#4962c2 97.5%,#3f55b8 100%)"></i><i style="left:712.00px;width:8.80px;background:linear-gradient(#3f55b8 0%,#4862c2 2.5%,#5672ce 5%,#6887d9 7.5%,#7f9de0 10%,#98b0df 12.5%,#b2bed2 15%,#c7c0bb 17.5%,#d6b19e 20%,#d99d83 22.5%,#d7866b 25%,#d07057 27.5%,#c75c49 30%,#be4b3d 32.5%,#b53c34 35%,#ae2f2e 37.5%,#a92329 40%,#a51626 42.5%,#a10c23 45%,#9f0622 47.5%,#9e0421 50%,#9f0622 52.5%,#a10c23 55%,#a51626 57.5%,#a92329 60%,#ae2f2e 62.5%,#b53c34 65%,#be4b3d 67.5%,#c75c49 70%,#d07057 72.5%,#d7866b 75%,#d99d83 77.5%,#d6b19e 80%,#c7c0bb 82.5%,#b2bed2 85%,#98b0df 87.5%,#7f9de0 90%,#6887d9 92.5%,#5672ce 95%,#4862c2 97.5%,#3f55b8 100%)"></i><i style="left:720.00px;width:8.80px;background:linear-gradient(#3f55b8 0%,#4862c2 2.5%,#5572ce 5%,#6786d8 7.5%,#7d9ce0 10%,#96afe0 12.5%,#afbdd4 15%,#c5c1bf 17.5%,#d4b4a2 20%,#d99f87 22.5%,#d88a6f 25%,#d1735b 27.5%,#c85f4b 30%,#c04d3f 32.5%,#b73e36 35%,#b03130 37.5%,#aa262a 40%,#a51927 42.5%,#a20e24 45%,#a00822 47.5%,#9f0522 50%,#a00822 52.5%,#a20e24 55%,#a51927 57.5%,#aa262a 60%,#b03130 62.5%,#b73e36 65%,#c04d3f 67.5%,#c85f4b 70%,#d1735b 72.5%,#d88a6f 75%,#d99f87 77.5%,#d4b4a2 80%,#c5c1bf 82.5%,#afbdd4 85%,#96afe0 87.5%,#7d9ce0 90%,#6786d8 92.5%,#5572ce 95%,#4862c2 97.5%,#3f55b8 100%)"></i><i style="left:728.00px;width:8.80px;background:linear-gradient(#3f55b8 0%,#4861c2 2.5%,#5471cd 5%,#6584d8 7.5%,#7b9ae0 10%,#94ade0 12.5%,#acbcd6 15%,#c2c2c2 17.5%,#d2b5a6 20%,#d9a38b 22.5%,#d88e72 25%,#d2785e 27.5%,#ca634e 30%,#c25142 32.5%,#b94237 35%,#b23530 37.5%,#ac282b 40%,#a61c28 42.5%,#a31225 45%,#a10b23 47.5%,#a00923 50%,#a10b23 52.5%,#a31225 55%,#a61c28 57.5%,#ac282b 60%,#b23530 62.5%,#b94237 65%,#c25142 67.5%,#ca634e 70%,#d2785e 72.5%,#d88e72 75%,#d9a38b 77.5%,#d2b5a6 80%,#c2c2c2 82.5%,#acbcd6 85%,#94ade0 87.5%,#7b9ae0 90%,#6584d8 92.5%,#5471cd 95%,#4861c2 97.5%,#3f55b8 100%)"></i><i style="left:736.00px;width:8.80px;background:linear-gradient(#3f54b8 0%,#4760c1 2.5%,#5470cc 5%,#6482d7 7.5%,#7997df 10%,#90ace0 12.5%,#a9bbd8 15%,#bfc2c6 17.5%,#d1b9ac 20%,#d8a790 22.5%,#d99278 25%,#d47d63 27.5%,#cc6952 30%,#c45645 32.5%,#bb463a 35%,#b43933 37.5%,#ad2d2d 40%,#a92229 42.5%,#a51726 45%,#a31025 47.5%,#a20e24 50%,#a31025 52.5%,#a51726 55%,#a92229 57.5%,#ad2d2d 60%,#b43933 62.5%,#bb463a 65%,#c45645 67.5%,#cc6952 70%,#d47d63 72.5%,#d99278 75%,#d8a790 77.5%,#d1b9ac 80%,#bfc2c6 82.5%,#a9bbd8 85%,#90ace0 87.5%,#7997df 90%,#6482d7 92.5%,#5470cc 95%,#4760c1 97.5%,#3f54b8 100%)"></i><i style="left:744.00px;width:8.80px;background:linear-gradient(#3f54b8 0%,#465fc0 2.5%,#536ecb 5%,#6380d6 7.5%,#7695de 10%,#8ea9e0 12.5%,#a5b9d9 15%,#bcc1ca 17.5%,#cebbb0 20%,#d8ab96 22.5%,#d9977d 25%,#d68268 27.5%,#cf6e56 30%,#c75c49 32.5%,#be4c3e 35%,#b73e36 37.5%,#b03230 40%,#ab282b 42.5%,#a71e28 45%,#a51727 47.5%,#a41426 50%,#a51727 52.5%,#a71e28 55%,#ab282b 57.5%,#b03230 60%,#b73e36 62.5%,#be4c3e 65%,#c75c49 67.5%,#cf6e56 70%,#d68268 72.5%,#d9977d 75%,#d8ab96 77.5%,#cebbb0 80%,#bcc1ca 82.5%,#a5b9d9 85%,#8ea9e0 87.5%,#7695de 90%,#6380d6 92.5%,#536ecb 95%,#465fc0 97.5%,#3f54b8 100%)"></i><i style="left:752.00px;width:8.80px;background:linear-gradient(#3e54b7 0%,#465ec0 2.5%,#526dca 5%,#607fd5 7.5%,#7392dd 10%,#8aa6e0 12.5%,#a1b7db 15%,#b8c0cd 17.5%,#cabdb6 20%,#d7af9c 22.5%,#d99d83 25%,#d7886d 27.5%,#d1755c 30%,#ca624d 32.5%,#c25242 35%,#bb4439 37.5%,#b43832 40%,#ae2e2e 42.5%,#ab262a 45%,#a82028 47.5%,#a71e28 50%,#a82028 52.5%,#ab262a 55%,#ae2e2e 57.5%,#b43832 60%,#bb4439 62.5%,#c25242 65%,#ca624d 67.5%,#d1755c 70%,#d7886d 72.5%,#d99d83 75%,#d7af9c 77.5%,#cabdb6 80%,#b8c0cd 82.5%,#a1b7db 85%,#8aa6e0 87.5%,#7392dd 90%,#607fd5 92.5%,#526dca 95%,#465ec0 97.5%,#3e54b7 100%)"></i><i style="left:760.00px;width:8.80px;background:linear-gradient(#3e54b7 0%,#465dbf 2.5%,#506bc9 5%,#5e7cd3 7.5%,#718fdc 10%,#86a3e0 12.5%,#9eb4dd 15%,#b4bfd1 17.5%,#c7c0bc 20%,#d4b4a3 22.5%,#d9a28a 25%,#d88f73 27.5%,#d47b62 30%,#cc6952 32.5%,#c55846 35%,#be4b3d 37.5%,#b73e36 40%,#b23530 42.5%,#ae2d2e 45%,#ac282b 47.5%,#ab272b 50%,#ac282b 52.5%,#ae2d2e 55%,#b23530 57.5%,#b73e36 60%,#be4b3d 62.5%,#c55846 65%,#cc6952 67.5%,#d47b62 70%,#d88f73 72.5%,#d9a28a 75%,#d4b4a3 77.5%,#c7c0bc 80%,#b4bfd1 82.5%,#9eb4dd 85%,#86a3e0 87.5%,#718fdc 90%,#5e7cd3 92.5%,#506bc9 95%,#465dbf 97.5%,#3e54b7 100%)"></i><i style="left:768.00px;width:8.80px;background:linear-gradient(#3e53b6 0%,#455cbe 2.5%,#4e6ac8 5%,#5c79d2 7.5%,#6e8ddb 10%,#82a0e0 12.5%,#99b1df 15%,#afbdd4 17.5%,#c2c2c2 20%,#d1b7aa 22.5%,#d8a791 25%,#d9967b 27.5%,#d68368 30%,#d07158 32.5%,#c9604c 35%,#c25242 37.5%,#bb463a 40%,#b63d35 42.5%,#b33631 45%,#b0302f 47.5%,#af302f 50%,#b0302f 52.5%,#b33631 55%,#b63d35 57.5%,#bb463a 60%,#c25242 62.5%,#c9604c 65%,#d07158 67.5%,#d68368 70%,#d9967b 72.5%,#d8a791 75%,#d1b7aa 77.5%,#c2c2c2 80%,#afbdd4 82.5%,#99b1df 85%,#82a0e0 87.5%,#6e8ddb 90%,#5c79d2 92.5%,#4e6ac8 95%,#455cbe 97.5%,#3e53b6 100%)"></i><i style="left:776.00px;width:8.80px;background:linear-gradient(#3e52b5 0%,#445cbd 2.5%,#4d68c7 5%,#5b77d1 7.5%,#6a89da 10%,#7e9de0 12.5%,#94ade0 15%,#aabbd8 17.5%,#bdc2c8 20%,#cebbb1 22.5%,#d8ad99 25%,#d99d83 27.5%,#d88b70 30%,#d3795f 32.5%,#cc6952 35%,#c65b48 37.5%,#c04e3f 40%,#bb4639 42.5%,#b73e36 45%,#b43a33 47.5%,#b43832 50%,#b43a33 52.5%,#b73e36 55%,#bb4639 57.5%,#c04e3f 60%,#c65b48 62.5%,#cc6952 65%,#d3795f 67.5%,#d88b70 70%,#d99d83 72.5%,#d8ad99 75%,#cebbb1 77.5%,#bdc2c8 80%,#aabbd8 82.5%,#94ade0 85%,#7e9de0 87.5%,#6a89da 90%,#5b77d1 92.5%,#4d68c7 95%,#445cbd 97.5%,#3e52b5 100%)"></i><i style="left:784.00px;width:8.80px;background:linear-gradient(#3d51b5 0%,#435abc 2.5%,#4c66c5 5%,#5875d0 7.5%,#6786d8 10%,#7a99df 12.5%,#8faae0 15%,#a4b8da 17.5%,#b8c0cd 20%,#c9beb9 22.5%,#d4b3a2 25%,#d9a48b 27.5%,#d99378 30%,#d68267 32.5%,#d17259 35%,#ca634e 37.5%,#c55846 40%,#c04e3f 42.5%,#bc483b 45%,#ba4438 47.5%,#b94237 50%,#ba4438 52.5%,#bc483b 55%,#c04e3f 57.5%,#c55846 60%,#ca634e 62.5%,#d17259 65%,#d68267 67.5%,#d99378 70%,#d9a48b 72.5%,#d4b3a2 75%,#c9beb9 77.5%,#b8c0cd 80%,#a4b8da 82.5%,#8faae0 85%,#7a99df 87.5%,#6786d8 90%,#5875d0 92.5%,#4c66c5 95%,#435abc 97.5%,#3d51b5 100%)"></i><i style="left:792.00px;width:8.80px;background:linear-gradient(#3d50b4 0%,#4259bb 2.5%,#4a63c3 5%,#5672ce 7.5%,#6482d7 10%,#7695de 12.5%,#89a6e0 15%,#9eb4dd 17.5%,#b3bfd2 20%,#c3c2c1 22.5%,#d1b8aa 25%,#d8aa95 27.5%,#d99b80 30%,#d88b70 32.5%,#d47c62 35%,#cf6e55 37.5%,#ca624d 40%,#c55846 42.5%,#c25242 45%,#c04d3f 47.5%,#bf4d3e 50%,#c04d3f 52.5%,#c25242 55%,#c55846 57.5%,#ca624d 60%,#cf6e55 62.5%,#d47c62 65%,#d88b70 67.5%,#d99b80 70%,#d8aa95 72.5%,#d1b8aa 75%,#c3c2c1 77.5%,#b3bfd2 80%,#9eb4dd 82.5%,#89a6e0 85%,#7695de 87.5%,#6482d7 90%,#5672ce 92.5%,#4a63c3 95%,#4259bb 97.5%,#3d50b4 100%)"></i><i style="left:800.00px;width:8.80px;background:linear-gradient(#3c50b3 0%,#4158ba 2.5%,#4962c2 5%,#546fcc 7.5%,#617fd5 10%,#7190dd 12.5%,#84a2e0 15%,#98b1de 17.5%,#abbcd6 20%,#bec1c8 22.5%,#ccbcb3 25%,#d6b09e 27.5%,#d9a38a 30%,#d99478 32.5%,#d6866a 35%,#d2785e 37.5%,#ce6d55 40%,#ca634e 42.5%,#c75c49 45%,#c55946 47.5%,#c45745 50%,#c55946 52.5%,#c75c49 55%,#ca634e 57.5%,#ce6d55 60%,#d2785e 62.5%,#d6866a 65%,#d99478 67.5%,#d9a38a 70%,#d6b09e 72.5%,#ccbcb3 75%,#bec1c8 77.5%,#abbcd6 80%,#98b1de 82.5%,#84a2e0 85%,#7190dd 87.5%,#617fd5 90%,#546fcc 92.5%,#4962c2 95%,#4158ba 97.5%,#3c50b3 100%)"></i><i style="left:808.00px;width:8.80px;background:linear-gradient(#3c4fb3 0%,#4056b8 2.5%,#4760c0 5%,#516cc9 7.5%,#5d7bd3 10%,#6d8cdb 12.5%,#7e9ddf 15%,#92acdf 17.5%,#a5b8d9 20%,#b7bfcd 22.5%,#c6bfbc 25%,#d2b6a8 27.5%,#d8a994 30%,#d99c83 32.5%,#d88f74 35%,#d58368 37.5%,#d2775e 40%,#cf6f56 42.5%,#cc6852 45%,#ca644f 47.5%,#c9634d 50%,#ca644f 52.5%,#cc6852 55%,#cf6f56 57.5%,#d2775e 60%,#d58368 62.5%,#d88f74 65%,#d99c83 67.5%,#d8a994 70%,#d2b6a8 72.5%,#c6bfbc 75%,#b7bfcd 77.5%,#a5b8d9 80%,#92acdf 82.5%,#7e9ddf 85%,#6d8cdb 87.5%,#5d7bd3 90%,#516cc9 92.5%,#4760c0 95%,#4056b8 97.5%,#3c4fb3 100%)"></i><i style="left:816.00px;width:8.80px;background:linear-gradient(#3b4eb2 0%,#3f55b7 2.5%,#455ebe 5%,#4f69c7 7.5%,#5a77d0 10%,#6887d8 12.5%,#7998de 15%,#8ba7df 17.5%,#9eb4db 20%,#b0bdd2 22.5%,#bfc1c4 25%,#ccbbb1 27.5%,#d4b09f 30%,#d8a58d 32.5%,#d8987f 35%,#d78d72 37.5%,#d58368 40%,#d37b60 42.5%,#d0745b 45%,#cf7058 47.5%,#cf6f57 50%,#cf7058 52.5%,#d0745b 55%,#d37b60 57.5%,#d58368 60%,#d78d72 62.5%,#d8987f 65%,#d8a58d 67.5%,#d4b09f 70%,#ccbbb1 72.5%,#bfc1c4 75%,#b0bdd2 77.5%,#9eb4db 80%,#8ba7df 82.5%,#7998de 85%,#6887d8 87.5%,#5a77d0 90%,#4f69c7 92.5%,#455ebe 95%,#3f55b7 97.5%,#3b4eb2 100%)"></i><i style="left:824.00px;width:8.80px;background:linear-gradient(#3b4db1 0%,#3e53b6 2.5%,#445cbd 5%,#4c66c5 7.5%,#5773cd 10%,#6482d6 12.5%,#7392dc 15%,#85a2df 17.5%,#97afdd 20%,#a8b9d6 22.5%,#b8bfcb 25%,#c6bfbb 27.5%,#d0b7a9 30%,#d5ac99 32.5%,#d8a289 35%,#d8977d 37.5%,#d78e73 40%,#d5866b 42.5%,#d48065 45%,#d37c62 47.5%,#d37b61 50%,#d37c62 52.5%,#d48065 55%,#d5866b 57.5%,#d78e73 60%,#d8977d 62.5%,#d8a289 65%,#d5ac99 67.5%,#d0b7a9 70%,#c6bfbb 72.5%,#b8bfcb 75%,#a8b9d6 77.5%,#97afdd 80%,#85a2df 82.5%,#7392dc 85%,#6482d6 87.5%,#5773cd 90%,#4c66c5 92.5%,#445cbd 95%,#3e53b6 97.5%,#3b4db1 100%)"></i><i style="left:832.00px;width:8.80px;background:linear-gradient(#3a4cb0 0%,#3d52b5 2.5%,#425abb 5%,#4a63c3 7.5%,#5570cb 10%,#607ed3 12.5%,#6e8dda 15%,#7f9cde 17.5%,#8faadf 20%,#a1b6d9 22.5%,#b0bdd1 25%,#bec0c4 27.5%,#cabcb4 30%,#d1b3a3 32.5%,#d6aa95 35%,#d8a189 37.5%,#d8987f 40%,#d89176 42.5%,#d78c71 45%,#d6886d 47.5%,#d5876c 50%,#d6886d 52.5%,#d78c71 55%,#d89176 57.5%,#d8987f 60%,#d8a189 62.5%,#d6aa95 65%,#d1b3a3 67.5%,#cabcb4 70%,#bec0c4 72.5%,#b0bdd1 75%,#a1b6d9 77.5%,#8faadf 80%,#7f9cde 82.5%,#6e8dda 85%,#607ed3 87.5%,#5570cb 90%,#4a63c3 92.5%,#425abb 95%,#3d52b5 97.5%,#3a4cb0 100%)"></i><i style="left:840.00px;width:8.80px;background:linear-gradient(#394baf 0%,#3d51b3 2.5%,#4158ba 5%,#4861c1 7.5%,#516cc8 10%,#5c79d0 12.5%,#6988d8 15%,#7897dc 17.5%,#88a5de 20%,#98b0dc 22.5%,#a8b9d5 25%,#b6becb 27.5%,#c2c0be 30%,#ccbaaf 32.5%,#d2b2a1 35%,#d5aa95 37.5%,#d7a28b 40%,#d79c83 42.5%,#d7977d 45%,#d79479 47.5%,#d79378 50%,#d79479 52.5%,#d7977d 55%,#d79c83 57.5%,#d7a28b 60%,#d5aa95 62.5%,#d2b2a1 65%,#ccbaaf 67.5%,#c2c0be 70%,#b6becb 72.5%,#a8b9d5 75%,#98b0dc 77.5%,#88a5de 80%,#7897dc 82.5%,#6988d8 85%,#5c79d0 87.5%,#516cc8 90%,#4861c1 92.5%,#4158ba 95%,#3d51b3 97.5%,#394baf 100%)"></i><i style="left:848.00px;width:8.80px;background:linear-gradient(#394bae 0%,#3c4fb2 2.5%,#4056b7 5%,#465fbe 7.5%,#4e69c5 10%,#5975ce 12.5%,#6482d5 15%,#7290da 17.5%,#819ede 20%,#90aadd 22.5%,#a0b5d9 25%,#aebbd1 27.5%,#babec7 30%,#c5beba 32.5%,#ccb8ad 35%,#d2b1a1 37.5%,#d5ab97 40%,#d6a58f 42.5%,#d7a289 45%,#d79e86 47.5%,#d79d85 50%,#d79e86 52.5%,#d7a289 55%,#d6a58f 57.5%,#d5ab97 60%,#d2b1a1 62.5%,#ccb8ad 65%,#c5beba 67.5%,#babec7 70%,#aebbd1 72.5%,#a0b5d9 75%,#90aadd 77.5%,#819ede 80%,#7290da 82.5%,#6482d5 85%,#5975ce 87.5%,#4e69c5 90%,#465fbe 92.5%,#4056b7 95%,#3c4fb2 97.5%,#394bae 100%)"></i><i style="left:856.00px;width:8.80px;background:linear-gradient(#384aae 0%,#3b4eb1 2.5%,#3f54b6 5%,#455cbc 7.5%,#4c66c3 10%,#5571cb 12.5%,#5f7dd2 15%,#6c8bd8 17.5%,#7a99dc 20%,#89a5dd 22.5%,#98aedc 25%,#a5b7d6 27.5%,#b2bcce 30%,#bcbfc4 32.5%,#c5bcb9 35%,#cbb8ae 37.5%,#cfb3a4 40%,#d3ae9c 42.5%,#d5ab97 45%,#d5a894 47.5%,#d6a893 50%,#d5a894 52.5%,#d5ab97 55%,#d3ae9c 57.5%,#cfb3a4 60%,#cbb8ae 62.5%,#c5bcb9 65%,#bcbfc4 67.5%,#b2bcce 70%,#a5b7d6 72.5%,#98aedc 75%,#89a5dd 77.5%,#7a99dc 80%,#6c8bd8 82.5%,#5f7dd2 85%,#5571cb 87.5%,#4c66c3 90%,#455cbc 92.5%,#3f54b6 95%,#3b4eb1 97.5%,#384aae 100%)"></i><i style="left:864.00px;width:8.80px;background:linear-gradient(#3749ac 0%,#3a4db0 2.5%,#3e52b4 5%,#435aba 7.5%,#4963c0 10%,#516dc8 12.5%,#5b78cf 15%,#6785d6 17.5%,#7392da 20%,#819fdd 22.5%,#8fa9dd 25%,#9cb2d9 27.5%,#a8b9d3 30%,#b3bdcc 32.5%,#bcbfc3 35%,#c4bdb9 37.5%,#c9b9b1 40%,#cdb6a9 42.5%,#cfb2a4 45%,#d1b1a1 47.5%,#d1b19f 50%,#d1b1a1 52.5%,#cfb2a4 55%,#cdb6a9 57.5%,#c9b9b1 60%,#c4bdb9 62.5%,#bcbfc3 65%,#b3bdcc 67.5%,#a8b9d3 70%,#9cb2d9 72.5%,#8fa9dd 75%,#819fdd 77.5%,#7392da 80%,#6785d6 82.5%,#5b78cf 85%,#516dc8 87.5%,#4963c0 90%,#435aba 92.5%,#3e52b4 95%,#3a4db0 97.5%,#3749ac 100%)"></i><i style="left:872.00px;width:8.80px;background:linear-gradient(#3749ac 0%,#3a4caf 2.5%,#3d51b3 5%,#4157b8 7.5%,#475fbe 10%,#4f69c5 12.5%,#5774cc 15%,#627fd3 17.5%,#6e8cd8 20%,#7a98dc 22.5%,#87a3dd 25%,#94acdc 27.5%,#9fb4d7 30%,#aab9d1 32.5%,#b4bdcb 35%,#bbbec4 37.5%,#c1bebd 40%,#c5bcb6 42.5%,#c9b9b0 45%,#cab8ae 47.5%,#cab7ad 50%,#cab8ae 52.5%,#c9b9b0 55%,#c5bcb6 57.5%,#c1bebd 60%,#bbbec4 62.5%,#b4bdcb 65%,#aab9d1 67.5%,#9fb4d7 70%,#94acdc 72.5%,#87a3dd 75%,#7a98dc 77.5%,#6e8cd8 80%,#627fd3 82.5%,#5774cc 85%,#4f69c5 87.5%,#475fbe 90%,#4157b8 92.5%,#3d51b3 95%,#3a4caf 97.5%,#3749ac 100%)"></i><i style="left:880.00px;width:8.80px;background:linear-gradient(#3748ab 0%,#394bae 2.5%,#3c4fb2 5%,#4055b6 7.5%,#455dbc 10%,#4b65c2 12.5%,#546fc9 15%,#5d7ad0 17.5%,#6886d5 20%,#7391da 22.5%,#7f9cdc 25%,#8ba6dc 27.5%,#96aeda 30%,#a1b4d6 32.5%,#aab9d1 35%,#b2bbcc 37.5%,#b8bdc7 40%,#bcbec1 42.5%,#c0bebe 45%,#c1bdba 47.5%,#c2bdba 50%,#c1bdba 52.5%,#c0bebe 55%,#bcbec1 57.5%,#b8bdc7 60%,#b2bbcc 62.5%,#aab9d1 65%,#a1b4d6 67.5%,#96aeda 70%,#8ba6dc 72.5%,#7f9cdc 75%,#7391da 77.5%,#6886d5 80%,#5d7ad0 82.5%,#546fc9 85%,#4b65c2 87.5%,#455dbc 90%,#4055b6 92.5%,#3c4fb2 95%,#394bae 97.5%,#3748ab 100%)"></i><i style="left:888.00px;width:8.80px;background:linear-gradient(#3648ab 0%,#384aad 2.5%,#3b4eb1 5%,#3e54b4 7.5%,#435aba 10%,#4862bf 12.5%,#506bc6 15%,#5975cc 17.5%,#6280d2 20%,#6d8bd7 22.5%,#7795da 25%,#829fdc 27.5%,#8da8dc 30%,#98aed9 32.5%,#a0b4d6 35%,#a8b8d2 37.5%,#aebace 40%,#b3bcca 42.5%,#b7bdc7 45%,#b8bdc5 47.5%,#b9bdc4 50%,#b8bdc5 52.5%,#b7bdc7 55%,#b3bcca 57.5%,#aebace 60%,#a8b8d2 62.5%,#a0b4d6 65%,#98aed9 67.5%,#8da8dc 70%,#829fdc 72.5%,#7795da 75%,#6d8bd7 77.5%,#6280d2 80%,#5975cc 82.5%,#506bc6 85%,#4862bf 87.5%,#435aba 90%,#3e54b4 92.5%,#3b4eb1 95%,#384aad 97.5%,#3648ab 100%)"></i><i style="left:896.00px;width:8.80px;background:linear-gradient(#3647a9 0%,#3849ac 2.5%,#3a4daf 5%,#3d52b3 7.5%,#4158b8 10%,#475fbd 12.5%,#4d67c3 15%,#5571c9 17.5%,#5d7acf 20%,#6684d4 22.5%,#718fd8 25%,#7a98da 27.5%,#84a1db 30%,#8ea8db 32.5%,#96aeda 35%,#9db3d6 37.5%,#a3b5d4 40%,#a9b8d1 42.5%,#acbace 45%,#afbbce 47.5%,#afbbcd 50%,#afbbce 52.5%,#acbace 55%,#a9b8d1 57.5%,#a3b5d4 60%,#9db3d6 62.5%,#96aeda 65%,#8ea8db 67.5%,#84a1db 70%,#7a98da 72.5%,#718fd8 75%,#6684d4 77.5%,#5d7acf 80%,#5571c9 82.5%,#4d67c3 85%,#475fbd 87.5%,#4158b8 90%,#3d52b3 92.5%,#3a4daf 95%,#3849ac 97.5%,#3647a9 100%)"></i><i style="left:904.00px;width:8.80px;background:linear-gradient(#3646a9 0%,#3748ab 2.5%,#3a4cae 5%,#3c50b2 7.5%,#4056b6 10%,#445cba 12.5%,#4a64c0 15%,#516cc6 17.5%,#5875cc 20%,#617ed1 22.5%,#6a88d5 25%,#7391d8 27.5%,#7c9ada 30%,#85a1db 32.5%,#8da7db 35%,#95acd9 37.5%,#9ab0d7 40%,#9fb3d6 42.5%,#a2b4d4 45%,#a4b5d3 47.5%,#a5b6d2 50%,#a4b5d3 52.5%,#a2b4d4 55%,#9fb3d6 57.5%,#9ab0d7 60%,#95acd9 62.5%,#8da7db 65%,#85a1db 67.5%,#7c9ada 70%,#7391d8 72.5%,#6a88d5 75%,#617ed1 77.5%,#5875cc 80%,#516cc6 82.5%,#4a64c0 85%,#445cba 87.5%,#4056b6 90%,#3c50b2 92.5%,#3a4cae 95%,#3748ab 97.5%,#3646a9 100%)"></i><i style="left:912.00px;width:8.80px;background:linear-gradient(#3545a8 0%,#3748ab 2.5%,#394bad 5%,#3b4fb0 7.5%,#3f53b4 10%,#4259b8 12.5%,#4760bd 15%,#4d68c3 17.5%,#5570c8 20%,#5c79ce 22.5%,#6381d2 25%,#6c8ad6 27.5%,#7593d9 30%,#7c99da 32.5%,#849fda 35%,#8aa5da 37.5%,#90a9da 40%,#95acd9 42.5%,#98aed8 45%,#99b0d7 47.5%,#9ab0d7 50%,#99b0d7 52.5%,#98aed8 55%,#95acd9 57.5%,#90a9da 60%,#8aa5da 62.5%,#849fda 65%,#7c99da 67.5%,#7593d9 70%,#6c8ad6 72.5%,#6381d2 75%,#5c79ce 77.5%,#5570c8 80%,#4d68c3 82.5%,#4760bd 85%,#4259b8 87.5%,#3f53b4 90%,#3b4fb0 92.5%,#394bad 95%,#3748ab 97.5%,#3545a8 100%)"></i><i style="left:920.00px;width:8.80px;background:linear-gradient(#3545a8 0%,#3747a9 2.5%,#384aac 5%,#3a4dae 7.5%,#3d51b2 10%,#4057b6 12.5%,#455dbb 15%,#4a64c0 17.5%,#506bc6 20%,#5773cb 22.5%,#5e7bcf 25%,#6684d3 27.5%,#6d8bd6 30%,#7492d8 32.5%,#7b98d9 35%,#819dda 37.5%,#86a2da 40%,#8ba5da 42.5%,#8ea8d9 45%,#90a8d9 47.5%,#91a9d9 50%,#90a8d9 52.5%,#8ea8d9 55%,#8ba5da 57.5%,#86a2da 60%,#819dda 62.5%,#7b98d9 65%,#7492d8 67.5%,#6d8bd6 70%,#6684d3 72.5%,#5e7bcf 75%,#5773cb 77.5%,#506bc6 80%,#4a64c0 82.5%,#455dbb 85%,#4057b6 87.5%,#3d51b2 90%,#3a4dae 92.5%,#384aac 95%,#3747a9 97.5%,#3545a8 100%)"></i><i style="left:928.00px;width:8.80px;background:linear-gradient(#3544a7 0%,#3646a9 2.5%,#3749ab 5%,#394cad 7.5%,#3c50b1 10%,#3f55b4 12.5%,#435ab8 15%,#4860bd 17.5%,#4d67c2 20%,#536ec7 22.5%,#5976cb 25%,#607dcf 27.5%,#6684d3 30%,#6d8bd5 32.5%,#7391d7 35%,#7896d9 37.5%,#7d9bda 40%,#819eda 42.5%,#84a0da 45%,#86a1da 47.5%,#87a2da 50%,#86a1da 52.5%,#84a0da 55%,#819eda 57.5%,#7d9bda 60%,#7896d9 62.5%,#7391d7 65%,#6d8bd5 67.5%,#6684d3 70%,#607dcf 72.5%,#5976cb 75%,#536ec7 77.5%,#4d67c2 80%,#4860bd 82.5%,#435ab8 85%,#3f55b4 87.5%,#3c50b1 90%,#394cad 92.5%,#3749ab 95%,#3646a9 97.5%,#3544a7 100%)"></i><i style="left:936.00px;width:8.80px;background:linear-gradient(#3544a6 0%,#3646a8 2.5%,#3748aa 5%,#394bac 7.5%,#3b4eaf 10%,#3d53b2 12.5%,#4158b6 15%,#455dbb 17.5%,#4963bf 20%,#4f6ac4 22.5%,#5570c8 25%,#5a77cc 27.5%,#607dd0 30%,#6684d2 32.5%,#6b89d5 35%,#708ed7 37.5%,#7593d8 40%,#7996d8 42.5%,#7c99d8 45%,#7c99d8 47.5%,#7d9ad9 50%,#7c99d8 52.5%,#7c99d8 55%,#7996d8 57.5%,#7593d8 60%,#708ed7 62.5%,#6b89d5 65%,#6684d2 67.5%,#607dd0 70%,#5a77cc 72.5%,#5570c8 75%,#4f6ac4 77.5%,#4963bf 80%,#455dbb 82.5%,#4158b6 85%,#3d53b2 87.5%,#3b4eaf 90%,#394bac 92.5%,#3748aa 95%,#3646a8 97.5%,#3544a6 100%)"></i><i style="left:944.00px;width:8.80px;background:linear-gradient(#3444a6 0%,#3645a8 2.5%,#3647a9 5%,#384aab 7.5%,#3a4dad 10%,#3c51b1 12.5%,#3f55b4 15%,#435ab9 17.5%,#475fbc 20%,#4c65c0 22.5%,#516bc4 25%,#5672c9 27.5%,#5b78cc 30%,#607dcf 32.5%,#6583d2 35%,#6987d4 37.5%,#6e8bd5 40%,#708ed6 42.5%,#7391d6 45%,#7592d7 47.5%,#7592d7 50%,#7592d7 52.5%,#7391d6 55%,#708ed6 57.5%,#6e8bd5 60%,#6987d4 62.5%,#6583d2 65%,#607dcf 67.5%,#5b78cc 70%,#5672c9 72.5%,#516bc4 75%,#4c65c0 77.5%,#475fbc 80%,#435ab9 82.5%,#3f55b4 85%,#3c51b1 87.5%,#3a4dad 90%,#384aab 92.5%,#3647a9 95%,#3645a8 97.5%,#3444a6 100%)"></i><i style="left:952.00px;width:8.80px;background:linear-gradient(#3443a6 0%,#3545a6 2.5%,#3646a8 5%,#3749aa 7.5%,#394cac 10%,#3b4faf 12.5%,#3e53b2 15%,#4157b6 17.5%,#455dba 20%,#4862bd 22.5%,#4d67c2 25%,#516dc6 27.5%,#5772c9 30%,#5b77cc 32.5%,#5f7cce 35%,#6380d1 37.5%,#6784d3 40%,#6987d3 42.5%,#6b89d4 45%,#6d8ad4 47.5%,#6d8bd4 50%,#6d8ad4 52.5%,#6b89d4 55%,#6987d3 57.5%,#6784d3 60%,#6380d1 62.5%,#5f7cce 65%,#5b77cc 67.5%,#5772c9 70%,#516dc6 72.5%,#4d67c2 75%,#4862bd 77.5%,#455dba 80%,#4157b6 82.5%,#3e53b2 85%,#3b4faf 87.5%,#394cac 90%,#3749aa 92.5%,#3646a8 95%,#3545a6 97.5%,#3443a6 100%)"></i><i style="left:960.00px;width:8.80px;background:linear-gradient(#3443a5 0%,#3545a6 2.5%,#3545a8 5%,#3748a9 7.5%,#394bab 10%,#3a4dae 12.5%,#3d50b0 15%,#4055b4 17.5%,#4259b7 20%,#455eba 22.5%,#4a63bf 25%,#4e68c2 27.5%,#526dc5 30%,#5672c8 32.5%,#5a76ca 35%,#5d7acd 37.5%,#607dcf 40%,#6280d0 42.5%,#6582d1 45%,#6683d1 47.5%,#6683d2 50%,#6683d1 52.5%,#6582d1 55%,#6280d0 57.5%,#607dcf 60%,#5d7acd 62.5%,#5a76ca 65%,#5672c8 67.5%,#526dc5 70%,#4e68c2 72.5%,#4a63bf 75%,#455eba 77.5%,#4259b7 80%,#4055b4 82.5%,#3d50b0 85%,#3a4dae 87.5%,#394bab 90%,#3748a9 92.5%,#3545a8 95%,#3545a6 97.5%,#3443a5 100%)"></i><i style="left:968.00px;width:8.80px;background:linear-gradient(#3443a5 0%,#3444a6 2.5%,#3545a7 5%,#3647a8 7.5%,#384aaa 10%,#3a4cad 12.5%,#3b4faf 15%,#3e53b2 17.5%,#4057b5 20%,#445ab8 22.5%,#4760bc 25%,#4a64bf 27.5%,#4e68c2 30%,#526cc5 32.5%,#5570c8 35%,#5874c9 37.5%,#5a77cb 40%,#5c7acd 42.5%,#5e7bcd 45%,#607cce 47.5%,#607dce 50%,#607cce 52.5%,#5e7bcd 55%,#5c7acd 57.5%,#5a77cb 60%,#5874c9 62.5%,#5570c8 65%,#526cc5 67.5%,#4e68c2 70%,#4a64bf 72.5%,#4760bc 75%,#445ab8 77.5%,#4057b5 80%,#3e53b2 82.5%,#3b4faf 85%,#3a4cad 87.5%,#384aaa 90%,#3647a8 92.5%,#3545a7 95%,#3444a6 97.5%,#3443a5 100%)"></i><i style="left:976.00px;width:8.80px;background:linear-gradient(#3343a4 0%,#3444a5 2.5%,#3545a6 5%,#3646a7 7.5%,#3749a9 10%,#394bab 12.5%,#3a4ead 15%,#3d51b0 17.5%,#3e54b3 20%,#4158b5 22.5%,#445cb9 25%,#4760bb 27.5%,#4a64bf 30%,#4e68c1 32.5%,#516bc4 35%,#546fc6 37.5%,#5671c8 40%,#5874c9 42.5%,#5975ca 45%,#5976cb 47.5%,#5a76cb 50%,#5976cb 52.5%,#5975ca 55%,#5874c9 57.5%,#5671c8 60%,#546fc6 62.5%,#516bc4 65%,#4e68c1 67.5%,#4a64bf 70%,#4760bb 72.5%,#445cb9 75%,#4158b5 77.5%,#3e54b3 80%,#3d51b0 82.5%,#3a4ead 85%,#394bab 87.5%,#3749a9 90%,#3646a7 92.5%,#3545a6 95%,#3444a5 97.5%,#3343a4 100%)"></i><i style="left:984.00px;width:8.80px;background:linear-gradient(#3343a3 0%,#3343a4 2.5%,#3444a5 5%,#3546a7 7.5%,#3748a8 10%,#3849aa 12.5%,#394cac 15%,#3b4fae 17.5%,#3d52b1 20%,#3f55b3 22.5%,#4259b6 25%,#445db8 27.5%,#4860bc 30%,#4a63be 32.5%,#4d67c0 35%,#4f69c3 37.5%,#526cc4 40%,#536ec6 42.5%,#5470c6 45%,#5571c7 47.5%,#5571c7 50%,#5571c7 52.5%,#5470c6 55%,#536ec6 57.5%,#526cc4 60%,#4f69c3 62.5%,#4d67c0 65%,#4a63be 67.5%,#4860bc 70%,#445db8 72.5%,#4259b6 75%,#3f55b3 77.5%,#3d52b1 80%,#3b4fae 82.5%,#394cac 85%,#3849aa 87.5%,#3748a8 90%,#3546a7 92.5%,#3444a5 95%,#3343a4 97.5%,#3343a3 100%)"></i><i style="left:992.00px;width:8.80px;background:linear-gradient(#3342a3 0%,#3342a4 2.5%,#3444a5 5%,#3545a6 7.5%,#3647a7 10%,#3748a9 12.5%,#384bab 15%,#3a4dad 17.5%,#3c50af 20%,#3e53b1 22.5%,#4057b4 25%,#4259b6 27.5%,#455cb9 30%,#4760bb 32.5%,#4962bd 35%,#4c65bf 37.5%,#4d67c1 40%,#4f69c2 42.5%,#506bc3 45%,#516cc3 47.5%,#516cc4 50%,#516cc3 52.5%,#506bc3 55%,#4f69c2 57.5%,#4d67c1 60%,#4c65bf 62.5%,#4962bd 65%,#4760bb 67.5%,#455cb9 70%,#4259b6 72.5%,#4057b4 75%,#3e53b1 77.5%,#3c50af 80%,#3a4dad 82.5%,#384bab 85%,#3748a9 87.5%,#3647a7 90%,#3545a6 92.5%,#3444a5 95%,#3342a4 97.5%,#3342a3 100%)"></i></div>
  <svg class="a" style="left:0;top:0" width="1070" height="625">
    <polygon points="563.7,291.2 942.6,115.0 939.4,130.6 563.7,291.9" fill="url(#sideg)"/>
    <path d="M551.8,239.8 L909.9,73.3 L942.6,115.5" stroke="#3d52b0" stroke-width="0.9" fill="none" opacity="0.75"/>
    <path d="M563.7,291.7 L939.4,130.6 L942.6,115.5" stroke="#2e3c80" stroke-width="0.9" fill="none" opacity="0.7"/>
  </svg>
  <div class="a" style="left:948px;top:93px;width:40px;height:197px;background:linear-gradient(#b40426 0%,#c0282f 3.12%,#cb3e38 6.25%,#d55042 9.38%,#de604d 12.5%,#e57058 15.62%,#ec7f63 18.75%,#f18d6f 21.88%,#f49a7b 25%,#f7a687 28.12%,#f7b194 31.25%,#f7bba0 34.38%,#f5c4ad 37.5%,#f1ccb9 40.62%,#ecd3c5 43.75%,#e5d8d1 46.88%,#dddddd 50%,#d5dbe6 53.12%,#ccd9ee 56.25%,#c2d5f4 59.38%,#b8d0f9 62.5%,#aec9fd 65.62%,#a3c2ff 68.75%,#98b9ff 71.88%,#8db0fe 75%,#82a5fb 78.12%,#779af7 81.25%,#6c8ef1 84.38%,#6282ea 87.5%,#5775e1 90.62%,#4d68d7 93.75%,#445acc 96.88%,#3b4cc0 100%)"></div>
  <div class="t vtk" style="left:951px;top:65px;font-size:18.2px;line-height:24px;font-weight:bold;-webkit-text-stroke:0">Ion_Density</div>
  <div class="t vtk lab" style="top:85px">2.85e+15</div>
  <div class="t vtk lab" style="top:113.5px">2.447e+15</div>
  <div class="t vtk lab" style="top:141.5px">2.044e+15</div>
  <div class="t vtk lab" style="top:169px">1.642e+15</div>
  <div class="t vtk lab" style="top:198px">1.239e+15</div>
  <div class="t vtk lab" style="top:226px">8.366e+14</div>
  <div class="t vtk lab" style="top:254.5px">4.34e+14</div>
  <div class="t vtk lab" style="top:282px">3.134e+13</div>
  <svg class="a" style="left:470px;top:270px" width="50" height="40">
    <line x1="19.2" y1="27.5" x2="32.6" y2="21.1" stroke="#d33" stroke-width="1"/>
    <polygon points="32.6,21.1 28.5,21.8 29.8,24.2" fill="#c22"/>
    <line x1="19.2" y1="27.5" x2="14.4" y2="17.3" stroke="#22b" stroke-width="1.2"/>
    <line x1="15.5" y1="19.5" x2="14.4" y2="17.3" stroke="#2c2" stroke-width="2"/>
    <text x="33.2" y="20" font-family="Liberation Sans" font-style="italic" font-weight="bold" font-size="9.5" fill="#151515" stroke="#fff" stroke-width="0.3" paint-order="stroke">X</text>
    <text x="17.3" y="14.8" font-family="Liberation Sans" font-style="italic" font-weight="bold" font-size="7.5" fill="#151515">Y</text>
    <text x="18.3" y="16.8" font-family="Liberation Sans" font-style="italic" font-weight="bold" font-size="6.5" fill="#151515">Z</text>
  </svg>

  <!-- <line x1="503.8" y1="396" x2="503.8" y2="496" class="gd"/>
<line x1="537.9" y1="396" x2="537.9" y2="496" class="gd"/>
<line x1="572.1" y1="396" x2="572.1" y2="496" class="gd"/>
<line x1="606.3" y1="396" x2="606.3" y2="496" class="gd"/>
<line x1="640.5" y1="396" x2="640.5" y2="496" class="gd"/>
<line x1="674.6" y1="396" x2="674.6" y2="496" class="gd"/>
<line x1="708.8" y1="396" x2="708.8" y2="496" class="gd"/>
<line x1="743.0" y1="396" x2="743.0" y2="496" class="gd"/>
<line x1="777.1" y1="396" x2="777.1" y2="496" class="gd"/>
<line x1="811.3" y1="396" x2="811.3" y2="496" class="gd"/>
<line x1="845.5" y1="396" x2="845.5" y2="496" class="gd"/>
<line x1="879.6" y1="396" x2="879.6" y2="496" class="gd"/>
<line x1="913.8" y1="396" x2="913.8" y2="496" class="gd"/>
<line x1="948.0" y1="396" x2="948.0" y2="496" class="gd"/>
<line x1="982.1" y1="396" x2="982.1" y2="496" class="gd"/>
<line x1="1016.3" y1="396" x2="1016.3" y2="496" class="gd"/>
<line x1="1050.5" y1="396" x2="1050.5" y2="496" class="gd"/>
<line x1="471" y1="414.8" x2="1059" y2="414.8" class="gd"/>
<line x1="471" y1="431.2" x2="1059" y2="431.2" class="gd"/>
<line x1="471" y1="447.6" x2="1059" y2="447.6" class="gd"/>
<line x1="471" y1="464.0" x2="1059" y2="464.0" class="gd"/>
<line x1="471" y1="480.4" x2="1059" y2="480.4" class="gd"/>
<polyline points="473,398.3 1057,398.3" stroke="#8a5ad8" fill="none" stroke-width="1"/>
<polyline points="827,399.4 880,399.4" stroke="#3434c8" fill="none" stroke-width="1.2"/><polyline points="880,399.4 900,399.4" stroke="#8f86e8" fill="none" stroke-width="1.2"/><polyline points="900,399.6 975,399.6" stroke="#3434c8" fill="none" stroke-width="1.2"/><polyline points="975,399.4 1010,399.4" stroke="#8f86e8" fill="none" stroke-width="1.2"/><polyline points="1010,399.4 1027,399.4" stroke="#3434c8" fill="none" stroke-width="1.2"/>
<polyline points="473.0,398.4 474.5,403.1 476.0,407.6 477.5,411.8 479.0,415.8 480.5,419.5 482.0,423.0 483.5,426.3 485.0,429.4 486.5,432.2 488.0,434.8 489.5,437.1 491.0,439.2 492.5,441.1 494.0,442.7 495.5,444.2 497.0,445.3 498.5,446.3 500.0,447.0 501.5,447.4 503.0,447.7 504.5,447.7 506.0,447.4 507.5,447.0 509.0,446.3 510.5,445.3 512.0,444.2 513.5,442.7 515.0,441.1 516.5,439.2 518.0,437.1 519.5,434.8 521.0,432.2 522.5,429.4 524.0,426.3 525.5,423.0 527.0,419.5 528.5,415.8 530.0,411.8 531.5,407.6 533.0,403.1 534.5,398.4" stroke="#2233cc" fill="none" stroke-width="1"/>
<polyline points="473.0,398.4 475.0,400.0 477.0,401.6 479.0,403.1 481.0,404.6 483.0,406.0 485.0,407.4 487.0,408.7 489.0,410.0 491.0,411.2 493.0,412.3 495.0,413.4 497.0,414.5 499.0,415.5 501.0,416.5 503.0,417.5 505.0,418.4 507.0,419.3 509.0,420.2 511.0,421.0 513.0,421.8 515.0,422.6 517.0,423.4 519.0,424.1 521.0,424.9 523.0,425.6 525.0,426.3 527.0,427.0 529.0,427.8 531.0,428.5 533.0,429.2 535.0,429.9 537.0,430.6 539.0,431.3 541.0,432.0 543.0,432.6 545.0,433.3 547.0,434.0 549.0,434.6 551.0,435.3 553.0,435.9 555.0,436.5 557.0,437.1 559.0,437.7 561.0,438.3 563.0,438.9 565.0,439.5 567.0,440.0 569.0,440.6 571.0,441.1 573.0,441.6 575.0,442.2 577.0,442.7 579.0,443.2 581.0,443.7 583.0,444.2 585.0,444.8 587.0,445.3 589.0,445.8 591.0,446.3 593.0,446.8 595.0,447.3 597.0,447.8 599.0,448.3 601.0,448.8 603.0,449.2 605.0,449.7 607.0,450.2 609.0,450.6 611.0,451.1 613.0,451.5 615.0,451.9 617.0,452.4 619.0,452.8 621.0,453.2 623.0,453.5 625.0,453.9 627.0,454.3 629.0,454.6 631.0,455.0 633.0,455.3 635.0,455.6 637.0,455.9 639.0,456.2 641.0,456.4 643.0,456.7 645.0,456.9 647.0,457.1 649.0,457.3 651.0,457.5 653.0,457.7 655.0,457.9 657.0,458.1 659.0,458.3 661.0,458.5 663.0,458.7 665.0,458.9 667.0,459.1 669.0,459.2 671.0,459.4 673.0,459.6 675.0,459.7 677.0,459.9 679.0,460.0 681.0,460.2 683.0,460.3 685.0,460.5 687.0,460.6 689.0,460.7 691.0,460.9 693.0,461.0 695.0,461.1 697.0,461.3 699.0,461.4 701.0,461.5 703.0,461.7 705.0,461.8 707.0,461.9 709.0,462.0 711.0,462.1 713.0,462.3 715.0,462.4 717.0,462.5 719.0,462.6 721.0,462.7 723.0,462.8 725.0,463.0 727.0,463.1 729.0,463.2 731.0,463.3 733.0,463.4 735.0,463.5 737.0,463.7 739.0,463.8 741.0,463.9 743.0,464.0 745.0,464.1 747.0,464.2 749.0,464.4 751.0,464.5 753.0,464.6 755.0,464.7 757.0,464.8 759.0,464.9 761.0,465.0 763.0,465.1 765.0,465.2 767.0,465.3 769.0,465.4 771.0,465.5 773.0,465.6 775.0,465.7 777.0,465.8 779.0,465.9 781.0,466.0 783.0,466.1 785.0,466.1 787.0,466.2 789.0,466.3 791.0,466.4 793.0,466.5 795.0,466.6 797.0,466.7 799.0,466.8 801.0,466.9 803.0,467.0 805.0,467.1 807.0,467.1 809.0,467.2 811.0,467.3 813.0,467.4 815.0,467.5 817.0,467.6 819.0,467.7 821.0,467.8 823.0,467.9 825.0,468.0 827.0,468.1 829.0,468.2 831.0,468.3 833.0,468.4 835.0,468.5 837.0,468.6 839.0,468.8 841.0,468.9 843.0,469.0 845.0,469.1 847.0,469.2 849.0,469.3 851.0,469.5 853.0,469.6 855.0,469.7 857.0,469.9 859.0,470.0 861.0,470.2 863.0,470.3 865.0,470.5 867.0,470.6 869.0,470.8 871.0,471.0 873.0,471.1 875.0,471.3 877.0,471.5 879.0,471.6 881.0,471.8 883.0,472.0 885.0,472.2 887.0,472.3 889.0,472.5 891.0,472.7 893.0,472.8 895.0,473.0 897.0,473.2 899.0,473.3 901.0,473.5 903.0,473.6 905.0,473.8 907.0,473.9 909.0,474.1 911.0,474.2 913.0,474.3 915.0,474.4 917.0,474.6 919.0,474.7 921.0,474.8 923.0,474.9 925.0,475.0 927.0,475.1 929.0,475.3 931.0,475.4 933.0,475.5 935.0,475.6 937.0,475.7 939.0,475.8 941.0,475.9 943.0,476.0 945.0,476.1 947.0,476.2 949.0,476.3 951.0,476.4 953.0,476.5 955.0,476.6 957.0,476.7 959.0,476.8 961.0,476.9 963.0,477.0 965.0,477.0 967.0,477.1 969.0,477.2 971.0,477.3 973.0,477.4 975.0,477.5 977.0,477.6 979.0,477.7 981.0,477.7 983.0,477.8 985.0,477.9 987.0,478.0 989.0,478.1 991.0,478.1 993.0,478.2 995.0,478.3 997.0,478.4 999.0,478.5 1001.0,478.5 1003.0,478.6 1005.0,478.7 1007.0,478.8 1009.0,478.8 1011.0,478.9 1013.0,479.0 1015.0,479.1 1017.0,479.1 1019.0,479.2 1021.0,479.3 1023.0,479.3 1025.0,479.4 1027.0,479.5 1029.0,479.5 1031.0,479.6 1033.0,479.7 1035.0,479.7 1037.0,479.8 1039.0,479.9 1041.0,479.9 1043.0,480.0 1045.0,480.1 1047.0,480.1 1049.0,480.2 1051.0,480.2 1053.0,480.3 1055.0,480.3 1057.0,480.4" stroke="#1f6b2a" fill="none" stroke-width="1"/>
<polyline points="473.0,398.4 475.0,399.0 477.0,399.5 479.0,400.1 481.0,400.6 483.0,401.2 485.0,401.7 487.0,402.2 489.0,402.8 491.0,403.2 493.0,403.7 495.0,404.2 497.0,404.7 499.0,405.1 501.0,405.6 503.0,406.0 505.0,406.5 507.0,406.9 509.0,407.3 511.0,407.7 513.0,408.2 515.0,408.6 517.0,409.0 519.0,409.5 521.0,409.9 523.0,410.3 525.0,410.7 527.0,411.2 529.0,411.6 531.0,412.1 533.0,412.5 535.0,413.0 537.0,413.5 539.0,413.9 541.0,414.4 543.0,414.8 545.0,415.3 547.0,415.7 549.0,416.2 551.0,416.7 553.0,417.1 555.0,417.6 557.0,418.0 559.0,418.4 561.0,418.9 563.0,419.3 565.0,419.7 567.0,420.1 569.0,420.5 571.0,420.9 573.0,421.3 575.0,421.6 577.0,422.0 579.0,422.4 581.0,422.7 583.0,423.1 585.0,423.5 587.0,423.8 589.0,424.2 591.0,424.5 593.0,424.9 595.0,425.2 597.0,425.6 599.0,425.9 601.0,426.3 603.0,426.6 605.0,426.9 607.0,427.3 609.0,427.6 611.0,427.9 613.0,428.3 615.0,428.6 617.0,428.9 619.0,429.2 621.0,429.5 623.0,429.8 625.0,430.1 627.0,430.5 629.0,430.8 631.0,431.1 633.0,431.4 635.0,431.7 637.0,431.9 639.0,432.2 641.0,432.5 643.0,432.8 645.0,433.1 647.0,433.4 649.0,433.7 651.0,434.0 653.0,434.2 655.0,434.5 657.0,434.8 659.0,435.1 661.0,435.4 663.0,435.7 665.0,435.9 667.0,436.2 669.0,436.5 671.0,436.8 673.0,437.1 675.0,437.4 677.0,437.6 679.0,437.9 681.0,438.2 683.0,438.5 685.0,438.7 687.0,439.0 689.0,439.3 691.0,439.5 693.0,439.8 695.0,440.0 697.0,440.3 699.0,440.5 701.0,440.8 703.0,441.0 705.0,441.3 707.0,441.5 709.0,441.8 711.0,442.0 713.0,442.2 715.0,442.5 717.0,442.7 719.0,442.9 721.0,443.1 723.0,443.3 725.0,443.5 727.0,443.7 729.0,443.9 731.0,444.1 733.0,444.3 735.0,444.5 737.0,444.6 739.0,444.8 741.0,445.0 743.0,445.1 745.0,445.3 747.0,445.4 749.0,445.6 751.0,445.7 753.0,445.8 755.0,445.9 757.0,446.1 759.0,446.2 761.0,446.3 763.0,446.4 765.0,446.5 767.0,446.6 769.0,446.8 771.0,446.9 773.0,447.0 775.0,447.1 777.0,447.2 779.0,447.3 781.0,447.4 783.0,447.5 785.0,447.6 787.0,447.6 789.0,447.7 791.0,447.8 793.0,447.9 795.0,448.0 797.0,448.1 799.0,448.2 801.0,448.3 803.0,448.3 805.0,448.4 807.0,448.5 809.0,448.6 811.0,448.6 813.0,448.7 815.0,448.8 817.0,448.9 819.0,449.0 821.0,449.0 823.0,449.1 825.0,449.2 827.0,449.3 829.0,449.3 831.0,449.4 833.0,449.5 835.0,449.6 837.0,449.6 839.0,449.7 841.0,449.8 843.0,449.9 845.0,450.0 847.0,450.0 849.0,450.1 851.0,450.2 853.0,450.3 855.0,450.4 857.0,450.5 859.0,450.6 861.0,450.6 863.0,450.7 865.0,450.8 867.0,450.9 869.0,451.0 871.0,451.1 873.0,451.2 875.0,451.3 877.0,451.4 879.0,451.5 881.0,451.6 883.0,451.7 885.0,451.8 887.0,451.9 889.0,452.0 891.0,452.1 893.0,452.2 895.0,452.3 897.0,452.4 899.0,452.5 901.0,452.7 903.0,452.8 905.0,452.9 907.0,452.9 909.0,453.0 911.0,453.1 913.0,453.2 915.0,453.3 917.0,453.4 919.0,453.5 921.0,453.6 923.0,453.7 925.0,453.8 927.0,453.9 929.0,454.0 931.0,454.1 933.0,454.2 935.0,454.3 937.0,454.4 939.0,454.5 941.0,454.6 943.0,454.7 945.0,454.8 947.0,454.8 949.0,454.9 951.0,455.0 953.0,455.1 955.0,455.2 957.0,455.3 959.0,455.4 961.0,455.5 963.0,455.6 965.0,455.6 967.0,455.7 969.0,455.8 971.0,455.9 973.0,456.0 975.0,456.0 977.0,456.1 979.0,456.2 981.0,456.2 983.0,456.3 985.0,456.4 987.0,456.4 989.0,456.5 991.0,456.6 993.0,456.6 995.0,456.7 997.0,456.8 999.0,456.8 1001.0,456.9 1003.0,457.0 1005.0,457.0 1007.0,457.1 1009.0,457.1 1011.0,457.2 1013.0,457.3 1015.0,457.3 1017.0,457.4 1019.0,457.4 1021.0,457.5 1023.0,457.5 1025.0,457.6 1027.0,457.6 1029.0,457.7 1031.0,457.7 1033.0,457.8 1035.0,457.8 1037.0,457.9 1039.0,457.9 1041.0,458.0 1043.0,458.0 1045.0,458.1 1047.0,458.1 1049.0,458.1 1051.0,458.2 1053.0,458.2 1055.0,458.3 1057.0,458.3" stroke="#d43a3a" fill="none" stroke-width="1"/>
<polyline points="473.0,398.4 475.0,401.9 477.0,405.3 479.0,408.4 481.0,411.1 483.0,413.2 485.0,414.7 487.0,416.0 489.0,417.2 491.0,418.2 493.0,419.1 495.0,419.9 497.0,420.7 499.0,421.3 501.0,421.8 503.0,422.3 505.0,422.8 507.0,423.1 509.0,423.5 511.0,423.8 513.0,424.0 515.0,424.3 517.0,424.6 519.0,425.0 521.0,425.3 523.0,425.7 525.0,426.0 527.0,426.4 529.0,426.8 531.0,427.1 533.0,427.5 535.0,427.9 537.0,428.3 539.0,428.6 541.0,429.0 543.0,429.4 545.0,429.8 547.0,430.1 549.0,430.5 551.0,430.9 553.0,431.2 555.0,431.6 557.0,431.9 559.0,432.2 561.0,432.6 563.0,432.9 565.0,433.2 567.0,433.5 569.0,433.8 571.0,434.1 573.0,434.3 575.0,434.6 577.0,434.8 579.0,435.1 581.0,435.3 583.0,435.5 585.0,435.8 587.0,436.0 589.0,436.2 591.0,436.4 593.0,436.6 595.0,436.8 597.0,437.0 599.0,437.2 601.0,437.4 603.0,437.6 605.0,437.8 607.0,438.0 609.0,438.2 611.0,438.4 613.0,438.6 615.0,438.8 617.0,439.0 619.0,439.2 621.0,439.4 623.0,439.6 625.0,439.8 627.0,440.0 629.0,440.2 631.0,440.4 633.0,440.6 635.0,440.8 637.0,441.0 639.0,441.2 641.0,441.4 643.0,441.7 645.0,441.9 647.0,442.1 649.0,442.4 651.0,442.6 653.0,442.9 655.0,443.1 657.0,443.3 659.0,443.6 661.0,443.8 663.0,444.1 665.0,444.4 667.0,444.6 669.0,444.9 671.0,445.1 673.0,445.4 675.0,445.6 677.0,445.9 679.0,446.2 681.0,446.4 683.0,446.7 685.0,447.0 687.0,447.2 689.0,447.5 691.0,447.8 693.0,448.0 695.0,448.3 697.0,448.6 699.0,448.9 701.0,449.1 703.0,449.4 705.0,449.7 707.0,450.0 709.0,450.2 711.0,450.5 713.0,450.8 715.0,451.1 717.0,451.3 719.0,451.6 721.0,451.9 723.0,452.1 725.0,452.4 727.0,452.7 729.0,453.0 731.0,453.2 733.0,453.5 735.0,453.8 737.0,454.0 739.0,454.3 741.0,454.6 743.0,454.8 745.0,455.1 747.0,455.4 749.0,455.6 751.0,455.9 753.0,456.2 755.0,456.4 757.0,456.7 759.0,457.0 761.0,457.2 763.0,457.5 765.0,457.8 767.0,458.0 769.0,458.3 771.0,458.6 773.0,458.9 775.0,459.1 777.0,459.4 779.0,459.7 781.0,460.0 783.0,460.2 785.0,460.5 787.0,460.8 789.0,461.0 791.0,461.3 793.0,461.6 795.0,461.9 797.0,462.1 799.0,462.4 801.0,462.7 803.0,462.9 805.0,463.2 807.0,463.5 809.0,463.7 811.0,464.0 813.0,464.3 815.0,464.5 817.0,464.8 819.0,465.1 821.0,465.3 823.0,465.6 825.0,465.9 827.0,466.1 829.0,466.4 831.0,466.6 833.0,466.9 835.0,467.1 837.0,467.4 839.0,467.7 841.0,467.9 843.0,468.2 845.0,468.4 847.0,468.6 849.0,468.9 851.0,469.1 853.0,469.4 855.0,469.6 857.0,469.8 859.0,470.1 861.0,470.3 863.0,470.5 865.0,470.8 867.0,471.0 869.0,471.2 871.0,471.5 873.0,471.7 875.0,471.9 877.0,472.1 879.0,472.4 881.0,472.6 883.0,472.8 885.0,473.0 887.0,473.3 889.0,473.5 891.0,473.7 893.0,473.9 895.0,474.1 897.0,474.3 899.0,474.5 901.0,474.7 903.0,474.9 905.0,475.1 907.0,475.3 909.0,475.5 911.0,475.7 913.0,475.9 915.0,476.1 917.0,476.2 919.0,476.4 921.0,476.6 923.0,476.8 925.0,477.0 927.0,477.1 929.0,477.3 931.0,477.5 933.0,477.7 935.0,477.8 937.0,478.0 939.0,478.2 941.0,478.3 943.0,478.5 945.0,478.7 947.0,478.8 949.0,479.0 951.0,479.1 953.0,479.3 955.0,479.4 957.0,479.6 959.0,479.8 961.0,479.9 963.0,480.0 965.0,480.2 967.0,480.3 969.0,480.5 971.0,480.6 973.0,480.8 975.0,480.9 977.0,481.0 979.0,481.2 981.0,481.3 983.0,481.4 985.0,481.6 987.0,481.7 989.0,481.8 991.0,481.9 993.0,482.1 995.0,482.2 997.0,482.3 999.0,482.4 1001.0,482.5 1003.0,482.7 1005.0,482.8 1007.0,482.9 1009.0,483.0 1011.0,483.1 1013.0,483.2 1015.0,483.4 1017.0,483.5 1019.0,483.6 1021.0,483.7 1023.0,483.8 1025.0,483.9 1027.0,484.0 1029.0,484.1 1031.0,484.2 1033.0,484.3 1035.0,484.4 1037.0,484.5 1039.0,484.6 1041.0,484.7 1043.0,484.8 1045.0,484.9 1047.0,485.0 1049.0,485.1 1051.0,485.1 1053.0,485.2 1055.0,485.3 1057.0,485.4" stroke="#3ad43a" fill="none" stroke-width="1"/>
<polyline points="473.0,398.4 475.0,398.9 477.0,399.4 479.0,399.9 481.0,400.4 483.0,400.9 485.0,401.4 487.0,401.9 489.0,402.4 491.0,402.9 493.0,403.3 495.0,403.8 497.0,404.3 499.0,404.7 501.0,405.1 503.0,405.6 505.0,406.0 507.0,406.4 509.0,406.8 511.0,407.2 513.0,407.6 515.0,408.0 517.0,408.4 519.0,408.7 521.0,409.1 523.0,409.4 525.0,409.8 527.0,410.1 529.0,410.4 531.0,410.7 533.0,411.0 535.0,411.4 537.0,411.7 539.0,412.0 541.0,412.3 543.0,412.6 545.0,412.8 547.0,413.1 549.0,413.4 551.0,413.7 553.0,414.0 555.0,414.2 557.0,414.5 559.0,414.8 561.0,415.1 563.0,415.4 565.0,415.6 567.0,415.9 569.0,416.2 571.0,416.5 573.0,416.7 575.0,417.0 577.0,417.3 579.0,417.5 581.0,417.8 583.0,418.1 585.0,418.3 587.0,418.6 589.0,418.9 591.0,419.1 593.0,419.4 595.0,419.6 597.0,419.9 599.0,420.1 601.0,420.4 603.0,420.6 605.0,420.9 607.0,421.1 609.0,421.4 611.0,421.6 613.0,421.9 615.0,422.1 617.0,422.4 619.0,422.6 621.0,422.9 623.0,423.1 625.0,423.4 627.0,423.6 629.0,423.9 631.0,424.1 633.0,424.4 635.0,424.7 637.0,424.9 639.0,425.2 641.0,425.5 643.0,425.7 645.0,426.0 647.0,426.3 649.0,426.6 651.0,426.8 653.0,427.1 655.0,427.4 657.0,427.7 659.0,427.9 661.0,428.2 663.0,428.5 665.0,428.8 667.0,429.1 669.0,429.4 671.0,429.7 673.0,429.9 675.0,430.2 677.0,430.5 679.0,430.8 681.0,431.1 683.0,431.4 685.0,431.7 687.0,432.0 689.0,432.3 691.0,432.6 693.0,432.9 695.0,433.2 697.0,433.5 699.0,433.8 701.0,434.1 703.0,434.4 705.0,434.7 707.0,435.0 709.0,435.3 711.0,435.6 713.0,435.9 715.0,436.2 717.0,436.5 719.0,436.8 721.0,437.1 723.0,437.4 725.0,437.7 727.0,438.0 729.0,438.3 731.0,438.6 733.0,438.9 735.0,439.2 737.0,439.5 739.0,439.8 741.0,440.1 743.0,440.4 745.0,440.7 747.0,441.0 749.0,441.3 751.0,441.6 753.0,442.0 755.0,442.3 757.0,442.6 759.0,442.9 761.0,443.2 763.0,443.5 765.0,443.8 767.0,444.1 769.0,444.5 771.0,444.8 773.0,445.1 775.0,445.4 777.0,445.8 779.0,446.1 781.0,446.5 783.0,446.8 785.0,447.2 787.0,447.5 789.0,447.9 791.0,448.3 793.0,448.7 795.0,449.0 797.0,449.4 799.0,449.8 801.0,450.2 803.0,450.6 805.0,451.0 807.0,451.4 809.0,451.8 811.0,452.2 813.0,452.6 815.0,453.0 817.0,453.4 819.0,453.8 821.0,454.2 823.0,454.6 825.0,455.0 827.0,455.4 829.0,455.8 831.0,456.2 833.0,456.6 835.0,457.0 837.0,457.4 839.0,457.8 841.0,458.2 843.0,458.6 845.0,459.0 847.0,459.4 849.0,459.8 851.0,460.2 853.0,460.6 855.0,461.0 857.0,461.4 859.0,461.8 861.0,462.2 863.0,462.6 865.0,463.0 867.0,463.4 869.0,463.8 871.0,464.2 873.0,464.6 875.0,465.0 877.0,465.4 879.0,465.8 881.0,466.2 883.0,466.6 885.0,467.0 887.0,467.4 889.0,467.7 891.0,468.1 893.0,468.5 895.0,468.9 897.0,469.3 899.0,469.7 901.0,470.0 903.0,470.4 905.0,470.8 907.0,471.1 909.0,471.5 911.0,471.8 913.0,472.2 915.0,472.5 917.0,472.8 919.0,473.2 921.0,473.5 923.0,473.8 925.0,474.1 927.0,474.4 929.0,474.8 931.0,475.1 933.0,475.4 935.0,475.7 937.0,476.0 939.0,476.3 941.0,476.5 943.0,476.8 945.0,477.1 947.0,477.4 949.0,477.7 951.0,478.0 953.0,478.3 955.0,478.5 957.0,478.8 959.0,479.1 961.0,479.4 963.0,479.7 965.0,479.9 967.0,480.2 969.0,480.5 971.0,480.8 973.0,481.1 975.0,481.3 977.0,481.6 979.0,481.9 981.0,482.2 983.0,482.5 985.0,482.7 987.0,483.0 989.0,483.3 991.0,483.6 993.0,483.9 995.0,484.1 997.0,484.4 999.0,484.7 1001.0,485.0 1003.0,485.2 1005.0,485.5 1007.0,485.8 1009.0,486.1 1011.0,486.3 1013.0,486.6 1015.0,486.9 1017.0,487.2 1019.0,487.4 1021.0,487.7 1023.0,488.0 1025.0,488.3 1027.0,488.5 1029.0,488.8 1031.0,489.1 1033.0,489.3 1035.0,489.6 1037.0,489.9 1039.0,490.1 1041.0,490.4 1043.0,490.7 1045.0,490.9 1047.0,491.2 1049.0,491.5 1051.0,491.7 1053.0,492.0 1055.0,492.2 1057.0,492.5" stroke="#33c433" fill="none" stroke-width="1"/>
<rect x="480" y="447.8" width="5" height="5" fill="#1de21d"/>
<text x="488" y="453.8" class="lg">Pressure</text>
<rect x="586" y="447.8" width="5" height="5" fill="#dd1111"/>
<text x="594" y="453.8" class="lg">VelocityX</text>
<rect x="480" y="463.3" width="5" height="5" fill="#2ecb2e"/>
<text x="488" y="469.3" class="lg">VelocityY</text>
<rect x="586" y="463.3" width="5" height="5" fill="#1a6a26"/>
<text x="594" y="469.3" class="lg">Temperature</text>
<rect x="480" y="478.8" width="5" height="5" fill="#0a0ad0"/>
<text x="488" y="484.8" class="lg">TurbulentEnergyKinetic</text>
<rect x="586" y="478.8" width="5" height="5" fill="#7a4fd6"/>
<text x="594" y="484.8" class="lg">TurbulentDissipation</text>
<line x1="466.5" y1="395" x2="466.5" y2="497" stroke="#333" stroke-width="1"/>
<line x1="461.5" y1="398.4" x2="466.5" y2="398.4" stroke="#333" stroke-width="1"/>
<line x1="464.0" y1="402.5" x2="466.5" y2="402.5" stroke="#333" stroke-width="1"/>
<line x1="464.0" y1="406.6" x2="466.5" y2="406.6" stroke="#333" stroke-width="1"/>
<line x1="464.0" y1="410.7" x2="466.5" y2="410.7" stroke="#333" stroke-width="1"/>
<line x1="461.5" y1="414.8" x2="466.5" y2="414.8" stroke="#333" stroke-width="1"/>
<line x1="464.0" y1="418.9" x2="466.5" y2="418.9" stroke="#333" stroke-width="1"/>
<line x1="464.0" y1="423.0" x2="466.5" y2="423.0" stroke="#333" stroke-width="1"/>
<line x1="464.0" y1="427.1" x2="466.5" y2="427.1" stroke="#333" stroke-width="1"/>
<line x1="461.5" y1="431.2" x2="466.5" y2="431.2" stroke="#333" stroke-width="1"/>
<line x1="464.0" y1="435.3" x2="466.5" y2="435.3" stroke="#333" stroke-width="1"/>
<line x1="464.0" y1="439.4" x2="466.5" y2="439.4" stroke="#333" stroke-width="1"/>
<line x1="464.0" y1="443.5" x2="466.5" y2="443.5" stroke="#333" stroke-width="1"/>
<line x1="461.5" y1="447.6" x2="466.5" y2="447.6" stroke="#333" stroke-width="1"/>
<line x1="464.0" y1="451.7" x2="466.5" y2="451.7" stroke="#333" stroke-width="1"/>
<line x1="464.0" y1="455.8" x2="466.5" y2="455.8" stroke="#333" stroke-width="1"/>
<line x1="464.0" y1="459.9" x2="466.5" y2="459.9" stroke="#333" stroke-width="1"/>
<line x1="461.5" y1="464.0" x2="466.5" y2="464.0" stroke="#333" stroke-width="1"/>
<line x1="464.0" y1="468.1" x2="466.5" y2="468.1" stroke="#333" stroke-width="1"/>
<line x1="464.0" y1="472.2" x2="466.5" y2="472.2" stroke="#333" stroke-width="1"/>
<line x1="464.0" y1="476.3" x2="466.5" y2="476.3" stroke="#333" stroke-width="1"/>
<line x1="461.5" y1="480.4" x2="466.5" y2="480.4" stroke="#333" stroke-width="1"/>
<line x1="464.0" y1="484.5" x2="466.5" y2="484.5" stroke="#333" stroke-width="1"/>
<line x1="464.0" y1="488.6" x2="466.5" y2="488.6" stroke="#333" stroke-width="1"/>
<text x="458.5" y="401.9" class="tk" text-anchor="end">0</text>
<text x="458.5" y="418.3" class="tk" text-anchor="end">-0.2</text>
<text x="458.5" y="434.7" class="tk" text-anchor="end">-0.4</text>
<text x="458.5" y="451.1" class="tk" text-anchor="end">-0.6</text>
<text x="458.5" y="467.5" class="tk" text-anchor="end">-0.8</text>
<text x="458.5" y="483.9" class="tk" text-anchor="end">-1</text>
<line x1="471" y1="498" x2="1058" y2="498" stroke="#333" stroke-width="1"/>
<line x1="503.8" y1="498" x2="503.8" y2="501.5" stroke="#333" stroke-width="1"/>
<line x1="537.9" y1="498" x2="537.9" y2="501.5" stroke="#333" stroke-width="1"/>
<line x1="572.1" y1="498" x2="572.1" y2="501.5" stroke="#333" stroke-width="1"/>
<line x1="606.3" y1="498" x2="606.3" y2="501.5" stroke="#333" stroke-width="1"/>
<line x1="640.5" y1="498" x2="640.5" y2="503.5" stroke="#333" stroke-width="1"/>
<line x1="674.6" y1="498" x2="674.6" y2="501.5" stroke="#333" stroke-width="1"/>
<line x1="708.8" y1="498" x2="708.8" y2="501.5" stroke="#333" stroke-width="1"/>
<line x1="743.0" y1="498" x2="743.0" y2="501.5" stroke="#333" stroke-width="1"/>
<line x1="777.1" y1="498" x2="777.1" y2="501.5" stroke="#333" stroke-width="1"/>
<line x1="811.3" y1="498" x2="811.3" y2="503.5" stroke="#333" stroke-width="1"/>
<line x1="845.5" y1="498" x2="845.5" y2="501.5" stroke="#333" stroke-width="1"/>
<line x1="879.6" y1="498" x2="879.6" y2="501.5" stroke="#333" stroke-width="1"/>
<line x1="913.8" y1="498" x2="913.8" y2="501.5" stroke="#333" stroke-width="1"/>
<line x1="948.0" y1="498" x2="948.0" y2="501.5" stroke="#333" stroke-width="1"/>
<line x1="982.1" y1="498" x2="982.1" y2="503.5" stroke="#333" stroke-width="1"/>
<line x1="1016.3" y1="498" x2="1016.3" y2="501.5" stroke="#333" stroke-width="1"/>
<line x1="1050.5" y1="498" x2="1050.5" y2="501.5" stroke="#333" stroke-width="1"/>
<text x="640.5" y="514" class="tk" text-anchor="middle">50</text>
<text x="811.3" y="514" class="tk" text-anchor="middle">100</text>
<text x="982.1" y="514" class="tk" text-anchor="middle">150</text>
<text x="764.5" y="527" class="ax" text-anchor="middle">Iteration</text>
<text transform="translate(437.3,445) rotate(-90)" class="ax" text-anchor="middle" style="font-size:12px">Residual</text> DOCK -->
  <div class="a" style="left:416px;top:336px;width:653px;height:1px;background:#cfcac4"></div><div class="a" style="left:421px;top:332.5px;width:1px;height:3px;background:#fff"></div><div class="a" style="left:424px;top:332.5px;width:1px;height:3px;background:#fff"></div><div class="a" style="left:427px;top:332.5px;width:1px;height:3px;background:#fff"></div><div class="a" style="left:430px;top:332.5px;width:1px;height:3px;background:#fff"></div>
  <div class="a" style="left:416px;top:337px;width:653px;height:217px;background:#edeae6"></div>
  <div class="a" style="left:416px;top:336.5px;width:653px;height:1px;background:#fbfaf8"></div><div class="a" style="left:416px;top:351px;width:653px;height:1px;background:#d6d2cc"></div><div class="a" style="left:416px;top:352px;width:653px;height:1px;background:#f7f6f3"></div><div class="t" style="left:423px;top:339px">Graph</div>
  <div class="a fl" style="left:1048px;top:340px"><svg width="6" height="6"><path d="M1.5,0.5 h4 v4 M0.5,2 v3.5 h3.5 M1.5,4.5 L5,1" stroke="#777" stroke-width="0.9" fill="none"/></svg></div>
  <div class="a cl" style="left:1059px;top:340px"><svg width="6" height="6"><path d="M0.8,0.8 L5.2,5.2 M5.2,0.8 L0.8,5.2" stroke="#555" stroke-width="1.1"/></svg></div>
  <div class="a" style="left:419px;top:365px;width:650px;height:172px;background:#e6e3df;border:1px solid #bfbab3;border-right:none"></div>
  <div class="a" style="left:469px;top:354px;width:36px;height:12px;background:linear-gradient(#f0eeea,#dedad5);border:1px solid #bfbab3;border-bottom:none;border-radius:2px 2px 0 0"></div>
  <div class="a" style="left:420px;top:352px;width:50px;height:14px;background:#e6e3df;border:1px solid #bfbab3;border-bottom:none;border-top:2px solid #4f7fb0;border-radius:2px 2px 0 0"></div>
  <div class="t" style="left:427px;top:355px">Residual</div>
  <div class="t" style="left:477px;top:356px">CMD</div>
  <div class="t" style="left:427px;top:376px">&#35; of cpu :</div>
  <div class="a" style="left:476px;top:374px;width:528px;height:15px;background:#fff;border:1px solid #b7b1a9;border-radius:2px"></div>
  <div class="t" style="left:479px;top:376px">4</div>
  <div class="a" style="left:1008px;top:373px;width:54px;height:17px;background:linear-gradient(#f7f5f2,#e0dcd6);border:1px solid #b0aaa2;border-radius:2px"></div>
  <div class="t" style="left:1024px;top:376px">Start</div>
  <div class="a" style="left:469px;top:394px;width:592px;height:104px;background:#fff;border-top:2px solid #a29e98;border-left:1px solid #a29e98;border-right:1px solid #d9d5cf"></div>
  <svg class="a" style="left:0;top:0" width="1070" height="625"><line x1="503.8" y1="396" x2="503.8" y2="496" class="gd"/>
<line x1="537.9" y1="396" x2="537.9" y2="496" class="gd"/>
<line x1="572.1" y1="396" x2="572.1" y2="496" class="gd"/>
<line x1="606.3" y1="396" x2="606.3" y2="496" class="gd"/>
<line x1="640.5" y1="396" x2="640.5" y2="496" class="gd"/>
<line x1="674.6" y1="396" x2="674.6" y2="496" class="gd"/>
<line x1="708.8" y1="396" x2="708.8" y2="496" class="gd"/>
<line x1="743.0" y1="396" x2="743.0" y2="496" class="gd"/>
<line x1="777.1" y1="396" x2="777.1" y2="496" class="gd"/>
<line x1="811.3" y1="396" x2="811.3" y2="496" class="gd"/>
<line x1="845.5" y1="396" x2="845.5" y2="496" class="gd"/>
<line x1="879.6" y1="396" x2="879.6" y2="496" class="gd"/>
<line x1="913.8" y1="396" x2="913.8" y2="496" class="gd"/>
<line x1="948.0" y1="396" x2="948.0" y2="496" class="gd"/>
<line x1="982.1" y1="396" x2="982.1" y2="496" class="gd"/>
<line x1="1016.3" y1="396" x2="1016.3" y2="496" class="gd"/>
<line x1="1050.5" y1="396" x2="1050.5" y2="496" class="gd"/>
<line x1="471" y1="414.8" x2="1059" y2="414.8" class="gd"/>
<line x1="471" y1="431.2" x2="1059" y2="431.2" class="gd"/>
<line x1="471" y1="447.6" x2="1059" y2="447.6" class="gd"/>
<line x1="471" y1="464.0" x2="1059" y2="464.0" class="gd"/>
<line x1="471" y1="480.4" x2="1059" y2="480.4" class="gd"/>
<polyline points="473,398.3 1057,398.3" stroke="#8a5ad8" fill="none" stroke-width="1"/>
<polyline points="827,399.4 880,399.4" stroke="#3434c8" fill="none" stroke-width="1.2"/><polyline points="880,399.4 900,399.4" stroke="#8f86e8" fill="none" stroke-width="1.2"/><polyline points="900,399.6 975,399.6" stroke="#3434c8" fill="none" stroke-width="1.2"/><polyline points="975,399.4 1010,399.4" stroke="#8f86e8" fill="none" stroke-width="1.2"/><polyline points="1010,399.4 1027,399.4" stroke="#3434c8" fill="none" stroke-width="1.2"/>
<polyline points="472.8,398.3 474.0,402.6 475.2,406.7 476.4,410.5 477.6,414.2 478.8,417.7 480.0,421.0 481.2,424.1 482.4,427.0 483.6,429.7 484.8,432.3 486.0,434.6 487.2,436.7 488.4,438.7 489.6,440.4 490.8,441.9 492.0,443.3 493.2,444.4 494.4,445.4 495.6,446.2 496.8,446.7 498.0,447.1 499.2,447.3 500.4,447.3 501.6,447.2 502.8,446.9 504.0,446.5 505.2,446.1 506.4,445.5 507.6,444.7 508.8,443.9 510.0,442.9 511.2,441.9 512.4,440.7 513.6,439.3 514.8,437.9 516.0,436.4 517.2,434.7 518.4,432.9 519.6,431.0 520.8,429.0 522.0,426.8 523.2,424.6 524.4,422.2 525.6,419.7 526.8,417.1 528.0,414.3 529.2,411.5 530.4,408.5 531.6,405.4 532.8,402.2 534.0,398.9" stroke="#2233cc" fill="none" stroke-width="1"/>
<polyline points="473.0,398.4 475.0,400.0 477.0,401.6 479.0,403.1 481.0,404.6 483.0,406.0 485.0,407.4 487.0,408.7 489.0,410.0 491.0,411.2 493.0,412.3 495.0,413.4 497.0,414.5 499.0,415.5 501.0,416.5 503.0,417.5 505.0,418.4 507.0,419.3 509.0,420.2 511.0,421.0 513.0,421.8 515.0,422.6 517.0,423.4 519.0,424.1 521.0,424.9 523.0,425.6 525.0,426.3 527.0,427.0 529.0,427.8 531.0,428.5 533.0,429.2 535.0,429.9 537.0,430.6 539.0,431.3 541.0,432.0 543.0,432.6 545.0,433.3 547.0,434.0 549.0,434.6 551.0,435.3 553.0,435.9 555.0,436.5 557.0,437.1 559.0,437.7 561.0,438.3 563.0,438.9 565.0,439.5 567.0,440.0 569.0,440.6 571.0,441.1 573.0,441.6 575.0,442.2 577.0,442.7 579.0,443.2 581.0,443.7 583.0,444.2 585.0,444.8 587.0,445.3 589.0,445.8 591.0,446.3 593.0,446.8 595.0,447.3 597.0,447.8 599.0,448.3 601.0,448.8 603.0,449.2 605.0,449.7 607.0,450.2 609.0,450.6 611.0,451.1 613.0,451.5 615.0,451.9 617.0,452.4 619.0,452.8 621.0,453.2 623.0,453.5 625.0,453.9 627.0,454.3 629.0,454.6 631.0,455.0 633.0,455.3 635.0,455.6 637.0,455.9 639.0,456.2 641.0,456.4 643.0,456.7 645.0,456.9 647.0,457.1 649.0,457.3 651.0,457.5 653.0,457.7 655.0,457.9 657.0,458.1 659.0,458.3 661.0,458.5 663.0,458.7 665.0,458.9 667.0,459.1 669.0,459.2 671.0,459.4 673.0,459.6 675.0,459.7 677.0,459.9 679.0,460.0 681.0,460.2 683.0,460.3 685.0,460.5 687.0,460.6 689.0,460.7 691.0,460.9 693.0,461.0 695.0,461.1 697.0,461.3 699.0,461.4 701.0,461.5 703.0,461.7 705.0,461.8 707.0,461.9 709.0,462.0 711.0,462.1 713.0,462.3 715.0,462.4 717.0,462.5 719.0,462.6 721.0,462.7 723.0,462.8 725.0,463.0 727.0,463.1 729.0,463.2 731.0,463.3 733.0,463.4 735.0,463.5 737.0,463.7 739.0,463.8 741.0,463.9 743.0,464.0 745.0,464.1 747.0,464.2 749.0,464.4 751.0,464.5 753.0,464.6 755.0,464.7 757.0,464.8 759.0,464.9 761.0,465.0 763.0,465.1 765.0,465.2 767.0,465.3 769.0,465.4 771.0,465.5 773.0,465.6 775.0,465.7 777.0,465.8 779.0,465.9 781.0,466.0 783.0,466.1 785.0,466.1 787.0,466.2 789.0,466.3 791.0,466.4 793.0,466.5 795.0,466.6 797.0,466.7 799.0,466.8 801.0,466.9 803.0,467.0 805.0,467.1 807.0,467.1 809.0,467.2 811.0,467.3 813.0,467.4 815.0,467.5 817.0,467.6 819.0,467.7 821.0,467.8 823.0,467.9 825.0,468.0 827.0,468.1 829.0,468.2 831.0,468.3 833.0,468.4 835.0,468.5 837.0,468.6 839.0,468.8 841.0,468.9 843.0,469.0 845.0,469.1 847.0,469.2 849.0,469.3 851.0,469.5 853.0,469.6 855.0,469.7 857.0,469.9 859.0,470.0 861.0,470.2 863.0,470.3 865.0,470.5 867.0,470.6 869.0,470.8 871.0,471.0 873.0,471.1 875.0,471.3 877.0,471.5 879.0,471.6 881.0,471.8 883.0,472.0 885.0,472.2 887.0,472.3 889.0,472.5 891.0,472.7 893.0,472.8 895.0,473.0 897.0,473.2 899.0,473.3 901.0,473.5 903.0,473.6 905.0,473.8 907.0,473.9 909.0,474.1 911.0,474.2 913.0,474.3 915.0,474.4 917.0,474.6 919.0,474.7 921.0,474.8 923.0,474.9 925.0,475.0 927.0,475.1 929.0,475.3 931.0,475.4 933.0,475.5 935.0,475.6 937.0,475.7 939.0,475.8 941.0,475.9 943.0,476.0 945.0,476.1 947.0,476.2 949.0,476.3 951.0,476.4 953.0,476.5 955.0,476.6 957.0,476.7 959.0,476.8 961.0,476.9 963.0,477.0 965.0,477.0 967.0,477.1 969.0,477.2 971.0,477.3 973.0,477.4 975.0,477.5 977.0,477.6 979.0,477.7 981.0,477.7 983.0,477.8 985.0,477.9 987.0,478.0 989.0,478.1 991.0,478.1 993.0,478.2 995.0,478.3 997.0,478.4 999.0,478.5 1001.0,478.5 1003.0,478.6 1005.0,478.7 1007.0,478.8 1009.0,478.8 1011.0,478.9 1013.0,479.0 1015.0,479.1 1017.0,479.1 1019.0,479.2 1021.0,479.3 1023.0,479.3 1025.0,479.4 1027.0,479.5 1029.0,479.5 1031.0,479.6 1033.0,479.7 1035.0,479.7 1037.0,479.8 1039.0,479.9 1041.0,479.9 1043.0,480.0 1045.0,480.1 1047.0,480.1 1049.0,480.2 1051.0,480.2 1053.0,480.3 1055.0,480.3 1057.0,480.4" stroke="#1f6b2a" fill="none" stroke-width="1"/>
<polyline points="473.0,398.4 475.0,399.0 477.0,399.7 479.0,400.3 481.0,400.8 483.0,401.3 485.0,401.8 487.0,402.3 489.0,402.7 491.0,403.1 493.0,403.5 495.0,403.9 497.0,404.3 499.0,404.7 501.0,405.1 503.0,405.4 505.0,405.8 507.0,406.2 509.0,406.6 511.0,407.0 513.0,407.4 515.0,407.7 517.0,408.1 519.0,408.5 521.0,408.9 523.0,409.3 525.0,409.6 527.0,410.0 529.0,410.4 531.0,410.8 533.0,411.2 535.0,411.6 537.0,412.0 539.0,412.5 541.0,412.9 543.0,413.4 545.0,413.9 547.0,414.5 549.0,415.0 551.0,415.6 553.0,416.1 555.0,416.7 557.0,417.3 559.0,417.9 561.0,418.4 563.0,419.0 565.0,419.5 567.0,420.0 569.0,420.5 571.0,420.9 573.0,421.3 575.0,421.7 577.0,422.1 579.0,422.5 581.0,422.9 583.0,423.3 585.0,423.7 587.0,424.0 589.0,424.4 591.0,424.8 593.0,425.1 595.0,425.5 597.0,425.8 599.0,426.1 601.0,426.5 603.0,426.8 605.0,427.1 607.0,427.5 609.0,427.8 611.0,428.1 613.0,428.4 615.0,428.7 617.0,429.0 619.0,429.3 621.0,429.6 623.0,429.9 625.0,430.2 627.0,430.5 629.0,430.8 631.0,431.1 633.0,431.4 635.0,431.7 637.0,432.0 639.0,432.2 641.0,432.5 643.0,432.8 645.0,433.1 647.0,433.4 649.0,433.7 651.0,434.0 653.0,434.2 655.0,434.5 657.0,434.8 659.0,435.1 661.0,435.4 663.0,435.7 665.0,435.9 667.0,436.2 669.0,436.5 671.0,436.8 673.0,437.1 675.0,437.4 677.0,437.6 679.0,437.9 681.0,438.2 683.0,438.5 685.0,438.7 687.0,439.0 689.0,439.3 691.0,439.5 693.0,439.8 695.0,440.0 697.0,440.3 699.0,440.5 701.0,440.8 703.0,441.0 705.0,441.3 707.0,441.5 709.0,441.8 711.0,442.0 713.0,442.2 715.0,442.5 717.0,442.7 719.0,442.9 721.0,443.1 723.0,443.3 725.0,443.5 727.0,443.7 729.0,443.9 731.0,444.1 733.0,444.3 735.0,444.5 737.0,444.6 739.0,444.8 741.0,445.0 743.0,445.1 745.0,445.3 747.0,445.4 749.0,445.6 751.0,445.7 753.0,445.8 755.0,445.9 757.0,446.1 759.0,446.2 761.0,446.3 763.0,446.4 765.0,446.5 767.0,446.6 769.0,446.8 771.0,446.9 773.0,447.0 775.0,447.1 777.0,447.2 779.0,447.3 781.0,447.4 783.0,447.5 785.0,447.6 787.0,447.6 789.0,447.7 791.0,447.8 793.0,447.9 795.0,448.0 797.0,448.1 799.0,448.2 801.0,448.3 803.0,448.3 805.0,448.4 807.0,448.5 809.0,448.6 811.0,448.6 813.0,448.7 815.0,448.8 817.0,448.9 819.0,449.0 821.0,449.0 823.0,449.1 825.0,449.2 827.0,449.3 829.0,449.3 831.0,449.4 833.0,449.5 835.0,449.6 837.0,449.6 839.0,449.7 841.0,449.8 843.0,449.9 845.0,450.0 847.0,450.0 849.0,450.1 851.0,450.2 853.0,450.3 855.0,450.4 857.0,450.5 859.0,450.6 861.0,450.6 863.0,450.7 865.0,450.8 867.0,450.9 869.0,451.0 871.0,451.1 873.0,451.2 875.0,451.3 877.0,451.4 879.0,451.5 881.0,451.6 883.0,451.7 885.0,451.8 887.0,451.9 889.0,452.0 891.0,452.1 893.0,452.2 895.0,452.3 897.0,452.4 899.0,452.5 901.0,452.7 903.0,452.8 905.0,452.9 907.0,452.9 909.0,453.0 911.0,453.1 913.0,453.2 915.0,453.3 917.0,453.4 919.0,453.5 921.0,453.6 923.0,453.7 925.0,453.8 927.0,453.9 929.0,454.0 931.0,454.1 933.0,454.2 935.0,454.3 937.0,454.4 939.0,454.5 941.0,454.6 943.0,454.7 945.0,454.8 947.0,454.8 949.0,454.9 951.0,455.0 953.0,455.1 955.0,455.2 957.0,455.3 959.0,455.4 961.0,455.5 963.0,455.6 965.0,455.6 967.0,455.7 969.0,455.8 971.0,455.9 973.0,456.0 975.0,456.0 977.0,456.1 979.0,456.2 981.0,456.2 983.0,456.3 985.0,456.4 987.0,456.4 989.0,456.5 991.0,456.6 993.0,456.6 995.0,456.7 997.0,456.8 999.0,456.8 1001.0,456.9 1003.0,457.0 1005.0,457.0 1007.0,457.1 1009.0,457.1 1011.0,457.2 1013.0,457.3 1015.0,457.3 1017.0,457.4 1019.0,457.4 1021.0,457.5 1023.0,457.5 1025.0,457.6 1027.0,457.6 1029.0,457.7 1031.0,457.7 1033.0,457.8 1035.0,457.8 1037.0,457.9 1039.0,457.9 1041.0,458.0 1043.0,458.0 1045.0,458.1 1047.0,458.1 1049.0,458.1 1051.0,458.2 1053.0,458.2 1055.0,458.3 1057.0,458.3" stroke="#d43a3a" fill="none" stroke-width="1"/>
<polyline points="473.0,398.4 475.0,401.9 477.0,405.3 479.0,408.4 481.0,411.1 483.0,413.2 485.0,414.7 487.0,416.0 489.0,417.2 491.0,418.2 493.0,419.1 495.0,419.9 497.0,420.7 499.0,421.3 501.0,421.8 503.0,422.3 505.0,422.8 507.0,423.1 509.0,423.5 511.0,423.8 513.0,424.0 515.0,424.3 517.0,424.6 519.0,425.0 521.0,425.3 523.0,425.7 525.0,426.0 527.0,426.4 529.0,426.8 531.0,427.1 533.0,427.5 535.0,427.9 537.0,428.3 539.0,428.6 541.0,429.0 543.0,429.4 545.0,429.8 547.0,430.1 549.0,430.5 551.0,430.9 553.0,431.2 555.0,431.6 557.0,431.9 559.0,432.2 561.0,432.6 563.0,432.9 565.0,433.2 567.0,433.5 569.0,433.8 571.0,434.1 573.0,434.3 575.0,434.6 577.0,434.8 579.0,435.1 581.0,435.3 583.0,435.5 585.0,435.8 587.0,436.0 589.0,436.2 591.0,436.4 593.0,436.6 595.0,436.8 597.0,437.0 599.0,437.2 601.0,437.4 603.0,437.6 605.0,437.8 607.0,438.0 609.0,438.2 611.0,438.4 613.0,438.6 615.0,438.8 617.0,439.0 619.0,439.2 621.0,439.4 623.0,439.6 625.0,439.8 627.0,440.0 629.0,440.2 631.0,440.4 633.0,440.6 635.0,440.8 637.0,441.0 639.0,441.2 641.0,441.4 643.0,441.7 645.0,441.9 647.0,442.1 649.0,442.4 651.0,442.6 653.0,442.9 655.0,443.1 657.0,443.3 659.0,443.6 661.0,443.8 663.0,444.1 665.0,444.4 667.0,444.6 669.0,444.9 671.0,445.1 673.0,445.4 675.0,445.6 677.0,445.9 679.0,446.2 681.0,446.4 683.0,446.7 685.0,447.0 687.0,447.2 689.0,447.5 691.0,447.8 693.0,448.0 695.0,448.3 697.0,448.6 699.0,448.9 701.0,449.1 703.0,449.4 705.0,449.7 707.0,450.0 709.0,450.2 711.0,450.5 713.0,450.8 715.0,451.1 717.0,451.3 719.0,451.6 721.0,451.9 723.0,452.1 725.0,452.4 727.0,452.7 729.0,453.0 731.0,453.2 733.0,453.5 735.0,453.8 737.0,454.0 739.0,454.3 741.0,454.6 743.0,454.8 745.0,455.1 747.0,455.4 749.0,455.6 751.0,455.9 753.0,456.2 755.0,456.4 757.0,456.7 759.0,457.0 761.0,457.2 763.0,457.5 765.0,457.8 767.0,458.0 769.0,458.3 771.0,458.6 773.0,458.9 775.0,459.1 777.0,459.4 779.0,459.7 781.0,460.0 783.0,460.2 785.0,460.5 787.0,460.8 789.0,461.0 791.0,461.3 793.0,461.6 795.0,461.9 797.0,462.1 799.0,462.4 801.0,462.7 803.0,462.9 805.0,463.2 807.0,463.5 809.0,463.7 811.0,464.0 813.0,464.3 815.0,464.5 817.0,464.8 819.0,465.1 821.0,465.3 823.0,465.6 825.0,465.9 827.0,466.1 829.0,466.4 831.0,466.6 833.0,466.9 835.0,467.1 837.0,467.4 839.0,467.7 841.0,467.9 843.0,468.2 845.0,468.4 847.0,468.6 849.0,468.9 851.0,469.1 853.0,469.4 855.0,469.6 857.0,469.8 859.0,470.1 861.0,470.3 863.0,470.5 865.0,470.8 867.0,471.0 869.0,471.2 871.0,471.5 873.0,471.7 875.0,471.9 877.0,472.1 879.0,472.4 881.0,472.6 883.0,472.8 885.0,473.0 887.0,473.3 889.0,473.5 891.0,473.7 893.0,473.9 895.0,474.1 897.0,474.3 899.0,474.5 901.0,474.7 903.0,474.9 905.0,475.1 907.0,475.3 909.0,475.5 911.0,475.7 913.0,475.9 915.0,476.1 917.0,476.2 919.0,476.4 921.0,476.6 923.0,476.8 925.0,477.0 927.0,477.1 929.0,477.3 931.0,477.5 933.0,477.7 935.0,477.8 937.0,478.0 939.0,478.2 941.0,478.3 943.0,478.5 945.0,478.7 947.0,478.8 949.0,479.0 951.0,479.1 953.0,479.3 955.0,479.4 957.0,479.6 959.0,479.8 961.0,479.9 963.0,480.0 965.0,480.2 967.0,480.3 969.0,480.5 971.0,480.6 973.0,480.8 975.0,480.9 977.0,481.0 979.0,481.2 981.0,481.3 983.0,481.4 985.0,481.6 987.0,481.7 989.0,481.8 991.0,481.9 993.0,482.1 995.0,482.2 997.0,482.3 999.0,482.4 1001.0,482.5 1003.0,482.7 1005.0,482.8 1007.0,482.9 1009.0,483.0 1011.0,483.1 1013.0,483.2 1015.0,483.4 1017.0,483.5 1019.0,483.6 1021.0,483.7 1023.0,483.8 1025.0,483.9 1027.0,484.0 1029.0,484.1 1031.0,484.2 1033.0,484.3 1035.0,484.4 1037.0,484.5 1039.0,484.6 1041.0,484.7 1043.0,484.8 1045.0,484.9 1047.0,485.0 1049.0,485.1 1051.0,485.1 1053.0,485.2 1055.0,485.3 1057.0,485.4" stroke="#3ad43a" fill="none" stroke-width="1"/>
<polyline points="473.0,398.4 475.0,398.9 477.0,399.4 479.0,399.9 481.0,400.4 483.0,400.9 485.0,401.4 487.0,401.9 489.0,402.4 491.0,402.9 493.0,403.3 495.0,403.8 497.0,404.3 499.0,404.7 501.0,405.1 503.0,405.6 505.0,406.0 507.0,406.4 509.0,406.8 511.0,407.2 513.0,407.6 515.0,408.0 517.0,408.4 519.0,408.7 521.0,409.1 523.0,409.4 525.0,409.8 527.0,410.1 529.0,410.4 531.0,410.7 533.0,411.0 535.0,411.4 537.0,411.7 539.0,412.0 541.0,412.3 543.0,412.6 545.0,412.8 547.0,413.1 549.0,413.4 551.0,413.7 553.0,414.0 555.0,414.2 557.0,414.5 559.0,414.8 561.0,415.1 563.0,415.4 565.0,415.6 567.0,415.9 569.0,416.2 571.0,416.5 573.0,416.7 575.0,417.0 577.0,417.3 579.0,417.5 581.0,417.8 583.0,418.1 585.0,418.3 587.0,418.6 589.0,418.9 591.0,419.1 593.0,419.4 595.0,419.6 597.0,419.9 599.0,420.1 601.0,420.4 603.0,420.6 605.0,420.9 607.0,421.1 609.0,421.4 611.0,421.6 613.0,421.9 615.0,422.1 617.0,422.4 619.0,422.6 621.0,422.9 623.0,423.1 625.0,423.4 627.0,423.6 629.0,423.9 631.0,424.1 633.0,424.4 635.0,424.7 637.0,424.9 639.0,425.2 641.0,425.5 643.0,425.7 645.0,426.0 647.0,426.3 649.0,426.6 651.0,426.8 653.0,427.1 655.0,427.4 657.0,427.7 659.0,427.9 661.0,428.2 663.0,428.5 665.0,428.8 667.0,429.1 669.0,429.4 671.0,429.7 673.0,429.9 675.0,430.2 677.0,430.5 679.0,430.8 681.0,431.1 683.0,431.4 685.0,431.7 687.0,432.0 689.0,432.3 691.0,432.6 693.0,432.9 695.0,433.2 697.0,433.5 699.0,433.8 701.0,434.1 703.0,434.4 705.0,434.7 707.0,435.0 709.0,435.3 711.0,435.6 713.0,435.9 715.0,436.2 717.0,436.5 719.0,436.8 721.0,437.1 723.0,437.4 725.0,437.7 727.0,438.0 729.0,438.3 731.0,438.6 733.0,438.9 735.0,439.2 737.0,439.5 739.0,439.8 741.0,440.1 743.0,440.4 745.0,440.7 747.0,441.0 749.0,441.3 751.0,441.6 753.0,442.0 755.0,442.3 757.0,442.6 759.0,442.9 761.0,443.2 763.0,443.5 765.0,443.8 767.0,444.1 769.0,444.5 771.0,444.8 773.0,445.1 775.0,445.4 777.0,445.8 779.0,446.1 781.0,446.5 783.0,446.8 785.0,447.2 787.0,447.5 789.0,447.9 791.0,448.3 793.0,448.7 795.0,449.0 797.0,449.4 799.0,449.8 801.0,450.2 803.0,450.6 805.0,451.0 807.0,451.4 809.0,451.8 811.0,452.2 813.0,452.6 815.0,453.0 817.0,453.4 819.0,453.8 821.0,454.2 823.0,454.6 825.0,455.0 827.0,455.4 829.0,455.8 831.0,456.2 833.0,456.6 835.0,457.0 837.0,457.4 839.0,457.8 841.0,458.2 843.0,458.6 845.0,459.0 847.0,459.4 849.0,459.8 851.0,460.2 853.0,460.6 855.0,461.0 857.0,461.4 859.0,461.8 861.0,462.2 863.0,462.6 865.0,463.0 867.0,463.4 869.0,463.8 871.0,464.2 873.0,464.6 875.0,465.0 877.0,465.4 879.0,465.8 881.0,466.2 883.0,466.6 885.0,467.0 887.0,467.4 889.0,467.7 891.0,468.1 893.0,468.5 895.0,468.9 897.0,469.3 899.0,469.7 901.0,470.0 903.0,470.4 905.0,470.8 907.0,471.1 909.0,471.5 911.0,471.8 913.0,472.2 915.0,472.5 917.0,472.8 919.0,473.2 921.0,473.5 923.0,473.8 925.0,474.1 927.0,474.4 929.0,474.8 931.0,475.1 933.0,475.4 935.0,475.7 937.0,476.0 939.0,476.3 941.0,476.5 943.0,476.8 945.0,477.1 947.0,477.4 949.0,477.7 951.0,478.0 953.0,478.3 955.0,478.5 957.0,478.8 959.0,479.1 961.0,479.4 963.0,479.7 965.0,479.9 967.0,480.2 969.0,480.5 971.0,480.8 973.0,481.1 975.0,481.3 977.0,481.6 979.0,481.9 981.0,482.2 983.0,482.5 985.0,482.7 987.0,483.0 989.0,483.3 991.0,483.6 993.0,483.9 995.0,484.1 997.0,484.4 999.0,484.7 1001.0,485.0 1003.0,485.2 1005.0,485.5 1007.0,485.8 1009.0,486.1 1011.0,486.3 1013.0,486.6 1015.0,486.9 1017.0,487.2 1019.0,487.4 1021.0,487.7 1023.0,488.0 1025.0,488.3 1027.0,488.5 1029.0,488.8 1031.0,489.1 1033.0,489.3 1035.0,489.6 1037.0,489.9 1039.0,490.1 1041.0,490.4 1043.0,490.7 1045.0,490.9 1047.0,491.2 1049.0,491.5 1051.0,491.7 1053.0,492.0 1055.0,492.2 1057.0,492.5" stroke="#33c433" fill="none" stroke-width="1"/>
<rect x="480" y="447.8" width="5" height="5" fill="#1de21d"/>
<text x="488" y="453.8" class="lg">Pressure</text>
<rect x="586" y="447.8" width="5" height="5" fill="#dd1111"/>
<text x="594" y="453.8" class="lg">VelocityX</text>
<rect x="480" y="463.3" width="5" height="5" fill="#2ecb2e"/>
<text x="488" y="469.3" class="lg">VelocityY</text>
<rect x="586" y="463.3" width="5" height="5" fill="#1a6a26"/>
<text x="594" y="469.3" class="lg">Temperature</text>
<rect x="480" y="478.8" width="5" height="5" fill="#0a0ad0"/>
<text x="488" y="484.8" class="lg">TurbulentEnergyKinetic</text>
<rect x="586" y="478.8" width="5" height="5" fill="#7a4fd6"/>
<text x="594" y="484.8" class="lg">TurbulentDissipation</text>
<line x1="466.5" y1="395" x2="466.5" y2="497" stroke="#333" stroke-width="1"/>
<line x1="461.5" y1="398.4" x2="466.5" y2="398.4" stroke="#333" stroke-width="1"/>
<line x1="464.0" y1="402.5" x2="466.5" y2="402.5" stroke="#333" stroke-width="1"/>
<line x1="464.0" y1="406.6" x2="466.5" y2="406.6" stroke="#333" stroke-width="1"/>
<line x1="464.0" y1="410.7" x2="466.5" y2="410.7" stroke="#333" stroke-width="1"/>
<line x1="461.5" y1="414.8" x2="466.5" y2="414.8" stroke="#333" stroke-width="1"/>
<line x1="464.0" y1="418.9" x2="466.5" y2="418.9" stroke="#333" stroke-width="1"/>
<line x1="464.0" y1="423.0" x2="466.5" y2="423.0" stroke="#333" stroke-width="1"/>
<line x1="464.0" y1="427.1" x2="466.5" y2="427.1" stroke="#333" stroke-width="1"/>
<line x1="461.5" y1="431.2" x2="466.5" y2="431.2" stroke="#333" stroke-width="1"/>
<line x1="464.0" y1="435.3" x2="466.5" y2="435.3" stroke="#333" stroke-width="1"/>
<line x1="464.0" y1="439.4" x2="466.5" y2="439.4" stroke="#333" stroke-width="1"/>
<line x1="464.0" y1="443.5" x2="466.5" y2="443.5" stroke="#333" stroke-width="1"/>
<line x1="461.5" y1="447.6" x2="466.5" y2="447.6" stroke="#333" stroke-width="1"/>
<line x1="464.0" y1="451.7" x2="466.5" y2="451.7" stroke="#333" stroke-width="1"/>
<line x1="464.0" y1="455.8" x2="466.5" y2="455.8" stroke="#333" stroke-width="1"/>
<line x1="464.0" y1="459.9" x2="466.5" y2="459.9" stroke="#333" stroke-width="1"/>
<line x1="461.5" y1="464.0" x2="466.5" y2="464.0" stroke="#333" stroke-width="1"/>
<line x1="464.0" y1="468.1" x2="466.5" y2="468.1" stroke="#333" stroke-width="1"/>
<line x1="464.0" y1="472.2" x2="466.5" y2="472.2" stroke="#333" stroke-width="1"/>
<line x1="464.0" y1="476.3" x2="466.5" y2="476.3" stroke="#333" stroke-width="1"/>
<line x1="461.5" y1="480.4" x2="466.5" y2="480.4" stroke="#333" stroke-width="1"/>
<line x1="464.0" y1="484.5" x2="466.5" y2="484.5" stroke="#333" stroke-width="1"/>
<line x1="464.0" y1="488.6" x2="466.5" y2="488.6" stroke="#333" stroke-width="1"/>
<text x="458.5" y="401.9" class="tk" text-anchor="end">0</text>
<text x="458.5" y="418.3" class="tk" text-anchor="end">-0.2</text>
<text x="458.5" y="434.7" class="tk" text-anchor="end">-0.4</text>
<text x="458.5" y="451.1" class="tk" text-anchor="end">-0.6</text>
<text x="458.5" y="467.5" class="tk" text-anchor="end">-0.8</text>
<text x="458.5" y="483.9" class="tk" text-anchor="end">-1</text>
<line x1="471" y1="498" x2="1058" y2="498" stroke="#333" stroke-width="1"/>
<line x1="503.8" y1="498" x2="503.8" y2="501.5" stroke="#333" stroke-width="1"/>
<line x1="537.9" y1="498" x2="537.9" y2="501.5" stroke="#333" stroke-width="1"/>
<line x1="572.1" y1="498" x2="572.1" y2="501.5" stroke="#333" stroke-width="1"/>
<line x1="606.3" y1="498" x2="606.3" y2="501.5" stroke="#333" stroke-width="1"/>
<line x1="640.5" y1="498" x2="640.5" y2="503.5" stroke="#333" stroke-width="1"/>
<line x1="674.6" y1="498" x2="674.6" y2="501.5" stroke="#333" stroke-width="1"/>
<line x1="708.8" y1="498" x2="708.8" y2="501.5" stroke="#333" stroke-width="1"/>
<line x1="743.0" y1="498" x2="743.0" y2="501.5" stroke="#333" stroke-width="1"/>
<line x1="777.1" y1="498" x2="777.1" y2="501.5" stroke="#333" stroke-width="1"/>
<line x1="811.3" y1="498" x2="811.3" y2="503.5" stroke="#333" stroke-width="1"/>
<line x1="845.5" y1="498" x2="845.5" y2="501.5" stroke="#333" stroke-width="1"/>
<line x1="879.6" y1="498" x2="879.6" y2="501.5" stroke="#333" stroke-width="1"/>
<line x1="913.8" y1="498" x2="913.8" y2="501.5" stroke="#333" stroke-width="1"/>
<line x1="948.0" y1="498" x2="948.0" y2="501.5" stroke="#333" stroke-width="1"/>
<line x1="982.1" y1="498" x2="982.1" y2="503.5" stroke="#333" stroke-width="1"/>
<line x1="1016.3" y1="498" x2="1016.3" y2="501.5" stroke="#333" stroke-width="1"/>
<line x1="1050.5" y1="498" x2="1050.5" y2="501.5" stroke="#333" stroke-width="1"/>
<text x="640.5" y="514" class="tk" text-anchor="middle">50</text>
<text x="811.3" y="514" class="tk" text-anchor="middle">100</text>
<text x="982.1" y="514" class="tk" text-anchor="middle">150</text>
<text x="764.5" y="527" class="ax" text-anchor="middle">Iteration</text>
<text transform="translate(437.3,445) rotate(-90)" class="ax" text-anchor="middle" style="font-size:12px">Residual</text></svg>

  <svg class="a" style="left:1056px;top:541px" width="12" height="12"><path d="M11,3 L3,11 M11,6 L6,11 M11,9 L9,11" stroke="#bdb8b0" stroke-width="1"/></svg>
  <!-- SMALL DATA WINDOW -->
  <div class="a" style="left:0;top:229px;width:225px;height:100px;background:#e9e6e2;border:1.5px solid #000;border-bottom:none"></div>
  <div class="a grp" style="left:2px;top:234px;width:84px;height:92px"></div>
  <div class="t sm" style="left:6px;top:230px;background:#e9e6e2;padding:0 1px;line-height:8px">Data Table</div>
  <div class="a white" style="left:3px;top:237px;width:82px;height:79px;border:1px solid #c7c2bb"></div>
  <div class="a hdr" style="left:4px;top:238px;width:80px;height:8px"></div>
  <div class="a" style="left:38px;top:238px;width:1px;height:61px;background:#ddd9d3"></div>
  <div class="t sm" style="left:9px;top:238px;line-height:8px">Energy (eV)</div>
  <div class="t sm" style="left:40px;top:238px;line-height:8px">ss Section (1.e-16cm</div>
  <div class="a" style="left:4px;top:256.0px;width:80px;height:1px;background:#e4e1dc"></div><div class="t sm" style="left:5px;top:247.5px;line-height:8px">10</div><div class="t sm" style="left:40px;top:247.5px;line-height:8px">0</div><div class="a" style="left:4px;top:266.6px;width:80px;height:1px;background:#e4e1dc"></div><div class="t sm" style="left:5px;top:258.1px;line-height:8px">20</div><div class="t sm" style="left:40px;top:258.1px;line-height:8px">5</div><div class="a" style="left:4px;top:277.2px;width:80px;height:1px;background:#e4e1dc"></div><div class="t sm" style="left:5px;top:268.7px;line-height:8px">30</div><div class="t sm" style="left:40px;top:268.7px;line-height:8px">3</div><div class="a" style="left:4px;top:287.8px;width:80px;height:1px;background:#e4e1dc"></div><div class="t sm" style="left:5px;top:279.3px;line-height:8px">40</div><div class="t sm" style="left:40px;top:279.3px;line-height:8px">4.5</div><div class="a" style="left:4px;top:298.4px;width:80px;height:1px;background:#e4e1dc"></div><div class="t sm" style="left:5px;top:289.9px;line-height:8px">50</div><div class="t sm" style="left:40px;top:289.9px;line-height:8px">1.2</div>
  <div class="a" style="left:6px;top:319px;width:5px;height:4px;background:#6aa84f"></div>
  <div class="t" style="left:15px;top:315px;font-size:7px;font-weight:bold;color:#4a9a3a">H</div>
  <div class="t" style="left:28px;top:315px;font-size:9px;font-weight:bold;color:#3a9a2a">+</div>
  <div class="a" style="left:39px;top:320px;width:5px;height:2px;background:#e0502a"></div>
  <div class="a grp" style="left:88px;top:234px;width:133px;height:92px"></div>
  <div class="t sm" style="left:91px;top:230px;background:#e9e6e2;padding:0 1px;line-height:8px">Plot</div>
  <div class="a white" style="left:107px;top:240px;width:110px;height:66px"></div>
  <svg class="a" style="left:0;top:0" width="1070" height="625"><line x1="107.5" y1="240.5" x2="107.5" y2="305.6" stroke="#3a3a3a" stroke-width="0.9"/>
<line x1="121.2" y1="240.5" x2="121.2" y2="305.6" stroke="#3a3a3a" stroke-width="0.9"/>
<line x1="134.9" y1="240.5" x2="134.9" y2="305.6" stroke="#3a3a3a" stroke-width="0.9"/>
<line x1="148.6" y1="240.5" x2="148.6" y2="305.6" stroke="#3a3a3a" stroke-width="0.9"/>
<line x1="162.2" y1="240.5" x2="162.2" y2="305.6" stroke="#3a3a3a" stroke-width="0.9"/>
<line x1="175.9" y1="240.5" x2="175.9" y2="305.6" stroke="#3a3a3a" stroke-width="0.9"/>
<line x1="189.6" y1="240.5" x2="189.6" y2="305.6" stroke="#3a3a3a" stroke-width="0.9"/>
<line x1="203.3" y1="240.5" x2="203.3" y2="305.6" stroke="#3a3a3a" stroke-width="0.9"/>
<line x1="217.0" y1="240.5" x2="217.0" y2="305.6" stroke="#3a3a3a" stroke-width="0.9"/>
<line x1="107.5" y1="305.6" x2="217.0" y2="305.6" stroke="#3a3a3a" stroke-width="0.9"/>
<line x1="107.5" y1="292.6" x2="217.0" y2="292.6" stroke="#3a3a3a" stroke-width="0.9"/>
<line x1="107.5" y1="279.6" x2="217.0" y2="279.6" stroke="#3a3a3a" stroke-width="0.9"/>
<line x1="107.5" y1="266.5" x2="217.0" y2="266.5" stroke="#3a3a3a" stroke-width="0.9"/>
<line x1="107.5" y1="253.5" x2="217.0" y2="253.5" stroke="#3a3a3a" stroke-width="0.9"/>
<line x1="107.5" y1="240.5" x2="217.0" y2="240.5" stroke="#3a3a3a" stroke-width="0.9"/>
<polyline points="107.5,305.6 134.9,240.5 162.2,266.5 189.6,247.0 217.0,290.0" stroke="#4a78d8" fill="none" stroke-width="0.9"/>
<circle cx="107.5" cy="305.6" r="1" fill="none" stroke="#e77" stroke-width="0.6"/>
<circle cx="134.9" cy="240.5" r="1" fill="none" stroke="#e77" stroke-width="0.6"/>
<circle cx="162.2" cy="266.5" r="1" fill="none" stroke="#e77" stroke-width="0.6"/>
<circle cx="189.6" cy="247.0" r="1" fill="none" stroke="#e77" stroke-width="0.6"/>
<circle cx="217.0" cy="290.0" r="1" fill="none" stroke="#e77" stroke-width="0.6"/>
<line x1="105.5" y1="240.5" x2="105.5" y2="305.6" stroke="#333" stroke-width="0.8"/>
<line x1="103.5" y1="305.6" x2="105.5" y2="305.6" stroke="#333" stroke-width="0.5"/>
<line x1="104.5" y1="303.0" x2="105.5" y2="303.0" stroke="#333" stroke-width="0.5"/>
<line x1="104.5" y1="300.4" x2="105.5" y2="300.4" stroke="#333" stroke-width="0.5"/>
<line x1="104.5" y1="297.8" x2="105.5" y2="297.8" stroke="#333" stroke-width="0.5"/>
<line x1="104.5" y1="295.2" x2="105.5" y2="295.2" stroke="#333" stroke-width="0.5"/>
<line x1="103.5" y1="292.6" x2="105.5" y2="292.6" stroke="#333" stroke-width="0.5"/>
<line x1="104.5" y1="290.0" x2="105.5" y2="290.0" stroke="#333" stroke-width="0.5"/>
<line x1="104.5" y1="287.4" x2="105.5" y2="287.4" stroke="#333" stroke-width="0.5"/>
<line x1="104.5" y1="284.8" x2="105.5" y2="284.8" stroke="#333" stroke-width="0.5"/>
<line x1="104.5" y1="282.2" x2="105.5" y2="282.2" stroke="#333" stroke-width="0.5"/>
<line x1="103.5" y1="279.6" x2="105.5" y2="279.6" stroke="#333" stroke-width="0.5"/>
<line x1="104.5" y1="277.0" x2="105.5" y2="277.0" stroke="#333" stroke-width="0.5"/>
<line x1="104.5" y1="274.4" x2="105.5" y2="274.4" stroke="#333" stroke-width="0.5"/>
<line x1="104.5" y1="271.7" x2="105.5" y2="271.7" stroke="#333" stroke-width="0.5"/>
<line x1="104.5" y1="269.1" x2="105.5" y2="269.1" stroke="#333" stroke-width="0.5"/>
<line x1="103.5" y1="266.5" x2="105.5" y2="266.5" stroke="#333" stroke-width="0.5"/>
<line x1="104.5" y1="263.9" x2="105.5" y2="263.9" stroke="#333" stroke-width="0.5"/>
<line x1="104.5" y1="261.3" x2="105.5" y2="261.3" stroke="#333" stroke-width="0.5"/>
<line x1="104.5" y1="258.7" x2="105.5" y2="258.7" stroke="#333" stroke-width="0.5"/>
<line x1="104.5" y1="256.1" x2="105.5" y2="256.1" stroke="#333" stroke-width="0.5"/>
<line x1="103.5" y1="253.5" x2="105.5" y2="253.5" stroke="#333" stroke-width="0.5"/>
<line x1="104.5" y1="250.9" x2="105.5" y2="250.9" stroke="#333" stroke-width="0.5"/>
<line x1="104.5" y1="248.3" x2="105.5" y2="248.3" stroke="#333" stroke-width="0.5"/>
<line x1="104.5" y1="245.7" x2="105.5" y2="245.7" stroke="#333" stroke-width="0.5"/>
<line x1="104.5" y1="243.1" x2="105.5" y2="243.1" stroke="#333" stroke-width="0.5"/>
<line x1="103.5" y1="240.5" x2="105.5" y2="240.5" stroke="#333" stroke-width="0.5"/>
<text x="102.5" y="307.4" class="sm" text-anchor="end">0</text>
<text x="102.5" y="294.4" class="sm" text-anchor="end">1</text>
<text x="102.5" y="281.4" class="sm" text-anchor="end">2</text>
<text x="102.5" y="268.3" class="sm" text-anchor="end">3</text>
<text x="102.5" y="255.3" class="sm" text-anchor="end">4</text>
<text x="102.5" y="242.3" class="sm" text-anchor="end">5</text>
<line x1="107.5" y1="308.1" x2="217.0" y2="308.1" stroke="#333" stroke-width="0.8"/>
<line x1="107.5" y1="308.1" x2="107.5" y2="310.6" stroke="#333" stroke-width="0.5"/>
<line x1="110.2" y1="308.1" x2="110.2" y2="309.6" stroke="#333" stroke-width="0.5"/>
<line x1="113.0" y1="308.1" x2="113.0" y2="309.6" stroke="#333" stroke-width="0.5"/>
<line x1="115.7" y1="308.1" x2="115.7" y2="309.6" stroke="#333" stroke-width="0.5"/>
<line x1="118.5" y1="308.1" x2="118.5" y2="309.6" stroke="#333" stroke-width="0.5"/>
<line x1="121.2" y1="308.1" x2="121.2" y2="310.6" stroke="#333" stroke-width="0.5"/>
<line x1="123.9" y1="308.1" x2="123.9" y2="309.6" stroke="#333" stroke-width="0.5"/>
<line x1="126.7" y1="308.1" x2="126.7" y2="309.6" stroke="#333" stroke-width="0.5"/>
<line x1="129.4" y1="308.1" x2="129.4" y2="309.6" stroke="#333" stroke-width="0.5"/>
<line x1="132.1" y1="308.1" x2="132.1" y2="309.6" stroke="#333" stroke-width="0.5"/>
<line x1="134.9" y1="308.1" x2="134.9" y2="310.6" stroke="#333" stroke-width="0.5"/>
<line x1="137.6" y1="308.1" x2="137.6" y2="309.6" stroke="#333" stroke-width="0.5"/>
<line x1="140.3" y1="308.1" x2="140.3" y2="309.6" stroke="#333" stroke-width="0.5"/>
<line x1="143.1" y1="308.1" x2="143.1" y2="309.6" stroke="#333" stroke-width="0.5"/>
<line x1="145.8" y1="308.1" x2="145.8" y2="309.6" stroke="#333" stroke-width="0.5"/>
<line x1="148.6" y1="308.1" x2="148.6" y2="310.6" stroke="#333" stroke-width="0.5"/>
<line x1="151.3" y1="308.1" x2="151.3" y2="309.6" stroke="#333" stroke-width="0.5"/>
<line x1="154.0" y1="308.1" x2="154.0" y2="309.6" stroke="#333" stroke-width="0.5"/>
<line x1="156.8" y1="308.1" x2="156.8" y2="309.6" stroke="#333" stroke-width="0.5"/>
<line x1="159.5" y1="308.1" x2="159.5" y2="309.6" stroke="#333" stroke-width="0.5"/>
<line x1="162.2" y1="308.1" x2="162.2" y2="310.6" stroke="#333" stroke-width="0.5"/>
<line x1="165.0" y1="308.1" x2="165.0" y2="309.6" stroke="#333" stroke-width="0.5"/>
<line x1="167.7" y1="308.1" x2="167.7" y2="309.6" stroke="#333" stroke-width="0.5"/>
<line x1="170.5" y1="308.1" x2="170.5" y2="309.6" stroke="#333" stroke-width="0.5"/>
<line x1="173.2" y1="308.1" x2="173.2" y2="309.6" stroke="#333" stroke-width="0.5"/>
<line x1="175.9" y1="308.1" x2="175.9" y2="310.6" stroke="#333" stroke-width="0.5"/>
<line x1="178.7" y1="308.1" x2="178.7" y2="309.6" stroke="#333" stroke-width="0.5"/>
<line x1="181.4" y1="308.1" x2="181.4" y2="309.6" stroke="#333" stroke-width="0.5"/>
<line x1="184.2" y1="308.1" x2="184.2" y2="309.6" stroke="#333" stroke-width="0.5"/>
<line x1="186.9" y1="308.1" x2="186.9" y2="309.6" stroke="#333" stroke-width="0.5"/>
<line x1="189.6" y1="308.1" x2="189.6" y2="310.6" stroke="#333" stroke-width="0.5"/>
<line x1="192.4" y1="308.1" x2="192.4" y2="309.6" stroke="#333" stroke-width="0.5"/>
<line x1="195.1" y1="308.1" x2="195.1" y2="309.6" stroke="#333" stroke-width="0.5"/>
<line x1="197.8" y1="308.1" x2="197.8" y2="309.6" stroke="#333" stroke-width="0.5"/>
<line x1="200.6" y1="308.1" x2="200.6" y2="309.6" stroke="#333" stroke-width="0.5"/>
<line x1="203.3" y1="308.1" x2="203.3" y2="310.6" stroke="#333" stroke-width="0.5"/>
<line x1="206.1" y1="308.1" x2="206.1" y2="309.6" stroke="#333" stroke-width="0.5"/>
<line x1="208.8" y1="308.1" x2="208.8" y2="309.6" stroke="#333" stroke-width="0.5"/>
<line x1="211.5" y1="308.1" x2="211.5" y2="309.6" stroke="#333" stroke-width="0.5"/>
<line x1="214.3" y1="308.1" x2="214.3" y2="309.6" stroke="#333" stroke-width="0.5"/>
<line x1="217.0" y1="308.1" x2="217.0" y2="310.6" stroke="#333" stroke-width="0.5"/>
<text x="107.5" y="317.1" class="sm" text-anchor="middle">10</text>
<text x="121.2" y="317.1" class="sm" text-anchor="middle">15</text>
<text x="134.9" y="317.1" class="sm" text-anchor="middle">20</text>
<text x="148.6" y="317.1" class="sm" text-anchor="middle">25</text>
<text x="162.2" y="317.1" class="sm" text-anchor="middle">30</text>
<text x="175.9" y="317.1" class="sm" text-anchor="middle">35</text>
<text x="189.6" y="317.1" class="sm" text-anchor="middle">40</text>
<text x="203.3" y="317.1" class="sm" text-anchor="middle">45</text>
<text x="217.0" y="317.1" class="sm" text-anchor="middle">50</text>
<text x="162" y="323.5" class="sm" style="font-weight:bold" text-anchor="middle">Energy (eV)</text>
<text transform="translate(95,272.5) rotate(-90)" class="sm" style="font-weight:bold" text-anchor="middle">Cross Section (1.e-16cm^2)</text></svg>

  <!-- BOTTOM WINDOW -->
  <div class="a" style="left:0;top:328px;width:416px;height:226px;background:#e9e6e2;border:1px solid #000;border-top:none;border-right:1.5px solid #000"></div>
  <div class="a" style="left:0;top:328px;width:416px;height:10px;background:linear-gradient(#101010 0,#101010 12%,#2e2e2e 20%,#1c1c1c);border-bottom:1px solid #24303c"></div>
  <div class="a" style="left:3px;top:331px;width:5px;height:4px;background:#dfe3ea;border-top:1px solid #aeb8c8"></div>
  <div class="t" style="left:196px;top:330px;font-size:5.3px;font-weight:bold;color:#eee;line-height:7px">prac_gui</div>
  <svg class="a" style="left:407px;top:331px" width="5" height="5"><path d="M0.5,0.5 L4.5,4.5 M4.5,0.5 L0.5,4.5" stroke="#e8e8e8" stroke-width="1"/></svg>
  <!-- File group -->
  <div class="a grp" style="left:6px;top:345px;width:82px;height:200px"></div>
  <div class="t xs" style="left:9px;top:342px;background:#e9e6e2;padding:0 1px">File</div>
  <div class="a white" style="left:8px;top:349px;width:80px;height:186px;border:1px solid #c7c2bb"></div>
  <div class="a" style="left:9px;top:371px;width:78px;height:6.5px;background:#8d8a7b"></div>
  <div class="t xs" style="left:24px;top:350px">Global Reaction</div>
  <div class="t xs" style="left:24px;top:357px">Global Thermodynamic</div>
  <div class="t xs" style="left:24px;top:364px">Local Reaction</div>
  <div class="t xs" style="left:23px;top:370.5px;color:#f0f0ea">rate_Ar</div>
  <div class="t xs" style="left:24px;top:378px">Local Thermodynamic</div>
  <div class="a fic" style="left:17px;top:350.5px"></div>
  <div class="a fic" style="left:17px;top:357.5px"></div>
  <div class="a fic" style="left:17px;top:364.5px"></div>
  <div class="a fic" style="left:17px;top:378.5px"></div>
  <div class="a" style="left:11px;top:355px;width:1px;height:24px;border-left:1px dotted #bbb"></div>
  <div class="a" style="left:10px;top:538px;width:5px;height:5px;background:#ddd;border:1px solid #bbb"></div>
  <div class="a" style="left:20px;top:537px;width:5px;height:6px;background:#2f64b0"></div>
  <div class="a" style="left:33px;top:540px;width:5px;height:3px;background:#4d9a2a"></div>
  <div class="t" style="left:43px;top:535px;font-size:6px;font-weight:bold;color:#3d8f2a;line-height:8px">H</div>
  <div class="t" style="left:56px;top:535px;font-size:6px;font-weight:bold;color:#3d8f2a;line-height:8px">&#10003;</div>
  <!-- Data group -->
  <div class="a grp" style="left:89px;top:345px;width:96px;height:200px"></div>
  <div class="t xs" style="left:92px;top:342px;background:#e9e6e2;padding:0 1px">Data</div>
  <div class="a vtab" style="top:352px;height:28px"></div>
  <div class="a vtab" style="top:423px;height:43px"></div>
  <div class="a vtab" style="top:466px;height:49px"></div>
  <div class="a" style="left:91px;top:380px;width:8px;height:43px;background:#f1efeb;border-left:1px solid #6b94c0;border-top:1px solid #c4bfb8;border-bottom:1px solid #c4bfb8"></div>
  <div class="t xs vt" style="left:92px;top:375px">Species</div>
  <div class="t xs vt" style="left:92px;top:417px">Bulk Reaction</div>
  <div class="t xs vt" style="left:92px;top:460px">Wall Reaction</div>
  <div class="t xs vt" style="left:92px;top:507px;color:#aaa">Thermodynamic</div>
  <div class="a white" style="left:99px;top:350px;width:85px;height:185px;border:1px solid #c7c2bb"></div>
  <div class="a hdr" style="left:100px;top:351px;width:83px;height:8px"></div>
  <div class="a" style="left:100px;top:359px;width:6px;height:175px;background:#eceae6;border-right:1px solid #dcd8d2"></div>
  <div class="t xs" style="left:133px;top:351px;font-weight:bold">Equation</div>
  <div class="a" style="left:106px;top:369.0px;width:76px;height:1px;background:#e2dfda"></div><div class="t xs" style="left:101px;top:360.5px;">1</div><div class="t xs" style="left:107px;top:360.5px;">Ar + E -&gt; Ar* + E</div><div class="a" style="left:106px;top:369.3px;width:76px;height:10px;background:#5b8ac2"></div><div class="a" style="left:106px;top:379.3px;width:76px;height:1px;background:#e2dfda"></div><div class="t xs" style="left:101px;top:370.8px;font-weight:bold">2</div><div class="t xs" style="left:107px;top:370.8px;color:#fff">Ar + E -&gt; Ar+ + 2E</div><div class="a" style="left:106px;top:389.6px;width:76px;height:1px;background:#e2dfda"></div><div class="t xs" style="left:101px;top:381.1px;">3</div><div class="t xs" style="left:107px;top:381.1px;">Ar* + E -&gt; Ar+ + 2E</div><div class="a" style="left:106px;top:399.9px;width:76px;height:1px;background:#e2dfda"></div><div class="t xs" style="left:101px;top:391.4px;">4</div><div class="t xs" style="left:107px;top:391.4px;">Ar* + E -&gt; Ar + E</div><div class="a" style="left:106px;top:410.2px;width:76px;height:1px;background:#e2dfda"></div><div class="t xs" style="left:101px;top:401.7px;">5</div><div class="t xs" style="left:107px;top:401.7px;">Ar* + Ar* -&gt; Ar+ + Ar + 2E</div><div class="a" style="left:106px;top:420.5px;width:76px;height:1px;background:#e2dfda"></div><div class="t xs" style="left:101px;top:412.0px;">6</div><div class="t xs" style="left:107px;top:412.0px;">Ar + E -&gt; Ar + E</div>
  <div class="t" style="left:93px;top:535px;font-size:8px;font-weight:bold;color:#3d9a2a;line-height:9px">+</div>
  <div class="a" style="left:103px;top:540px;width:5px;height:1.5px;background:#e0502a"></div>
  <div class="t" style="left:116px;top:535px;font-size:6px;font-weight:bold;color:#3d8f2a;line-height:8px">H</div>
  <!-- Properties group -->
  <div class="a grp" style="left:187px;top:346px;width:223px;height:199px"></div>
  <div class="t xs" style="left:189px;top:342px;background:#e9e6e2;padding:0 1px">Properties</div>
  <div class="t xs" style="left:191px;top:352.5px;">Data Type</div><div class="a" style="left:228px;top:352.5px;width:177px;height:8px;background:linear-gradient(#f1efec,#e6e3de);border:1px solid #cdc8c1;border-radius:1px"></div><div class="t xs" style="left:230px;top:352.5px;color:#bbb">Arrhenius</div><div class="t xs" style="left:399px;top:352.0px;font-size:5px">&#8597;</div><div class="t xs" style="left:191px;top:363.2px;">A (cm^3/s)</div><div class="a" style="left:228px;top:363.2px;width:177px;height:8px;background:#fff;border:1px solid #cdc8c1;border-radius:1px"></div><div class="t xs" style="left:230px;top:363.2px;">5.779e-11</div><div class="t xs" style="left:191px;top:373.9px;">B (a.u.)</div><div class="a" style="left:228px;top:373.9px;width:177px;height:8px;background:#fff;border:1px solid #cdc8c1;border-radius:1px"></div><div class="t xs" style="left:230px;top:373.9px;">0.6329</div><div class="t xs" style="left:191px;top:384.6px;">C (K)</div><div class="a" style="left:228px;top:384.6px;width:158px;height:8px;background:#fff;border:1px solid #cdc8c1;border-radius:1px"></div><div class="t xs" style="left:230px;top:384.6px;">1.864e5</div><div class="a" style="left:388px;top:384.6px;width:24px;height:8px;background:linear-gradient(#f1efec,#e6e3de);border:1px solid #cdc8c1;border-radius:1px"></div><div class="t xs" style="left:390px;top:384.6px;color:#bbb">K</div><div class="t xs" style="left:399px;top:384.1px;font-size:5px">&#8597;</div><div class="t xs" style="left:191px;top:395.3px;">Reactants</div><div class="a" style="left:228px;top:395.3px;width:177px;height:8px;background:#fff;border:1px solid #cdc8c1;border-radius:1px"></div><div class="t xs" style="left:230px;top:395.3px;">Ar:1.0 E:1.0</div><div class="t xs" style="left:191px;top:406.0px;">Products</div><div class="a" style="left:228px;top:406.0px;width:177px;height:8px;background:#fff;border:1px solid #cdc8c1;border-radius:1px"></div><div class="t xs" style="left:230px;top:406.0px;">Ar+:1.0 E:2.0</div><div class="t xs" style="left:191px;top:416.7px;">Type</div><div class="a" style="left:228px;top:416.7px;width:177px;height:8px;background:linear-gradient(#f1efec,#e6e3de);border:1px solid #cdc8c1;border-radius:1px"></div><div class="t xs" style="left:230px;top:416.7px;color:#bbb">Ionization</div><div class="t xs" style="left:399px;top:416.2px;font-size:5px">&#8597;</div><div class="t xs" style="left:191px;top:427.4px;">Loss energy (eV)</div><div class="a" style="left:228px;top:427.4px;width:177px;height:8px;background:#fff;border:1px solid #cdc8c1;border-radius:1px"></div><div class="t xs" style="left:230px;top:427.4px;">15.76</div><div class="t xs" style="left:191px;top:438.1px;">Reference</div><div class="a" style="left:228px;top:438.1px;width:177px;height:8px;background:#fff;border:1px solid #cdc8c1;border-radius:1px"></div><div class="t xs" style="left:230px;top:438.1px;">J. Chem. Phys. 43, 1464 (1965)</div>
  <div class="a grp" style="left:189px;top:452px;width:84px;height:92px"></div>
  <div class="t xs" style="left:192px;top:448px;background:#e9e6e2;padding:0 1px">Data Table</div>
  <div class="a white" style="left:191px;top:455px;width:81px;height:80px;border:1px solid #c7c2bb"></div>
  <div class="a hdr" style="left:192px;top:456px;width:79px;height:8px"></div>
  <div class="a" style="left:226px;top:456px;width:1px;height:18px;background:#ddd9d3"></div>
  <div class="a" style="left:192px;top:474px;width:79px;height:1px;background:#e4e1dc"></div>
  <div class="t xs" style="left:196px;top:456px">Energy (eV)</div>
  <div class="t xs" style="left:228px;top:456px">ss Section (1.e-16cm</div>
  <div class="t xs" style="left:193px;top:465px">0.0</div>
  <div class="t xs" style="left:228px;top:465px">0.0</div>
  <div class="t xs" style="left:195px;top:536px;color:#999">&#9644; H &#10010; &#9472;</div>
  <div class="a grp" style="left:275px;top:452px;width:131px;height:92px"></div>
  <div class="t xs" style="left:278px;top:448px;background:#e9e6e2;padding:0 1px">Plot</div>
  <div class="a white" style="left:300px;top:457px;width:100px;height:65px"></div>
  <svg class="a" style="left:0;top:0" width="1070" height="625"><line x1="304.4" y1="457.3" x2="304.4" y2="521.6" stroke="#666" stroke-width="0.7"/>
<line x1="320.3" y1="457.3" x2="320.3" y2="521.6" stroke="#666" stroke-width="0.7"/>
<line x1="336.1" y1="457.3" x2="336.1" y2="521.6" stroke="#666" stroke-width="0.7"/>
<line x1="352.0" y1="457.3" x2="352.0" y2="521.6" stroke="#666" stroke-width="0.7"/>
<line x1="367.9" y1="457.3" x2="367.9" y2="521.6" stroke="#666" stroke-width="0.7"/>
<line x1="383.7" y1="457.3" x2="383.7" y2="521.6" stroke="#666" stroke-width="0.7"/>
<line x1="399.6" y1="457.3" x2="399.6" y2="521.6" stroke="#666" stroke-width="0.7"/>
<line x1="304.4" y1="521.6" x2="399.6" y2="521.6" stroke="#666" stroke-width="0.7"/>
<line x1="304.4" y1="510.9" x2="399.6" y2="510.9" stroke="#666" stroke-width="0.7"/>
<line x1="304.4" y1="500.2" x2="399.6" y2="500.2" stroke="#666" stroke-width="0.7"/>
<line x1="304.4" y1="489.5" x2="399.6" y2="489.5" stroke="#666" stroke-width="0.7"/>
<line x1="304.4" y1="478.7" x2="399.6" y2="478.7" stroke="#666" stroke-width="0.7"/>
<line x1="304.4" y1="468.0" x2="399.6" y2="468.0" stroke="#666" stroke-width="0.7"/>
<line x1="304.4" y1="457.3" x2="399.6" y2="457.3" stroke="#666" stroke-width="0.7"/>
<line x1="299.8" y1="457.3" x2="299.8" y2="521.6" stroke="#333" stroke-width="0.7"/>
<line x1="296.3" y1="521.6" x2="299.8" y2="521.6" stroke="#333" stroke-width="0.5"/>
<line x1="297.3" y1="519.5" x2="299.8" y2="519.5" stroke="#333" stroke-width="0.5"/>
<line x1="297.3" y1="517.3" x2="299.8" y2="517.3" stroke="#333" stroke-width="0.5"/>
<line x1="297.3" y1="515.2" x2="299.8" y2="515.2" stroke="#333" stroke-width="0.5"/>
<line x1="297.3" y1="513.0" x2="299.8" y2="513.0" stroke="#333" stroke-width="0.5"/>
<line x1="296.3" y1="510.9" x2="299.8" y2="510.9" stroke="#333" stroke-width="0.5"/>
<line x1="297.3" y1="508.7" x2="299.8" y2="508.7" stroke="#333" stroke-width="0.5"/>
<line x1="297.3" y1="506.6" x2="299.8" y2="506.6" stroke="#333" stroke-width="0.5"/>
<line x1="297.3" y1="504.5" x2="299.8" y2="504.5" stroke="#333" stroke-width="0.5"/>
<line x1="297.3" y1="502.3" x2="299.8" y2="502.3" stroke="#333" stroke-width="0.5"/>
<line x1="296.3" y1="500.2" x2="299.8" y2="500.2" stroke="#333" stroke-width="0.5"/>
<line x1="297.3" y1="498.0" x2="299.8" y2="498.0" stroke="#333" stroke-width="0.5"/>
<line x1="297.3" y1="495.9" x2="299.8" y2="495.9" stroke="#333" stroke-width="0.5"/>
<line x1="297.3" y1="493.7" x2="299.8" y2="493.7" stroke="#333" stroke-width="0.5"/>
<line x1="297.3" y1="491.6" x2="299.8" y2="491.6" stroke="#333" stroke-width="0.5"/>
<line x1="296.3" y1="489.5" x2="299.8" y2="489.5" stroke="#333" stroke-width="0.5"/>
<line x1="297.3" y1="487.3" x2="299.8" y2="487.3" stroke="#333" stroke-width="0.5"/>
<line x1="297.3" y1="485.2" x2="299.8" y2="485.2" stroke="#333" stroke-width="0.5"/>
<line x1="297.3" y1="483.0" x2="299.8" y2="483.0" stroke="#333" stroke-width="0.5"/>
<line x1="297.3" y1="480.9" x2="299.8" y2="480.9" stroke="#333" stroke-width="0.5"/>
<line x1="296.3" y1="478.7" x2="299.8" y2="478.7" stroke="#333" stroke-width="0.5"/>
<line x1="297.3" y1="476.6" x2="299.8" y2="476.6" stroke="#333" stroke-width="0.5"/>
<line x1="297.3" y1="474.4" x2="299.8" y2="474.4" stroke="#333" stroke-width="0.5"/>
<line x1="297.3" y1="472.3" x2="299.8" y2="472.3" stroke="#333" stroke-width="0.5"/>
<line x1="297.3" y1="470.2" x2="299.8" y2="470.2" stroke="#333" stroke-width="0.5"/>
<line x1="296.3" y1="468.0" x2="299.8" y2="468.0" stroke="#333" stroke-width="0.5"/>
<line x1="297.3" y1="465.9" x2="299.8" y2="465.9" stroke="#333" stroke-width="0.5"/>
<line x1="297.3" y1="463.7" x2="299.8" y2="463.7" stroke="#333" stroke-width="0.5"/>
<line x1="297.3" y1="461.6" x2="299.8" y2="461.6" stroke="#333" stroke-width="0.5"/>
<line x1="297.3" y1="459.4" x2="299.8" y2="459.4" stroke="#333" stroke-width="0.5"/>
<line x1="296.3" y1="457.3" x2="299.8" y2="457.3" stroke="#333" stroke-width="0.5"/>
<text x="295.8" y="523.3" class="sm" text-anchor="end">-0.6</text>
<text x="295.8" y="512.6" class="sm" text-anchor="end">-0.4</text>
<text x="295.8" y="501.9" class="sm" text-anchor="end">-0.2</text>
<text x="295.8" y="491.2" class="sm" text-anchor="end">0</text>
<text x="295.8" y="480.4" class="sm" text-anchor="end">0.2</text>
<text x="295.8" y="469.7" class="sm" text-anchor="end">0.4</text>
<text x="295.8" y="459.0" class="sm" text-anchor="end">0.6</text>
<line x1="304.4" y1="524.6" x2="399.6" y2="524.6" stroke="#333" stroke-width="0.7"/>
<line x1="304.4" y1="524.6" x2="304.4" y2="527.6" stroke="#333" stroke-width="0.5"/>
<line x1="307.6" y1="524.6" x2="307.6" y2="526.6" stroke="#333" stroke-width="0.5"/>
<line x1="310.7" y1="524.6" x2="310.7" y2="526.6" stroke="#333" stroke-width="0.5"/>
<line x1="313.9" y1="524.6" x2="313.9" y2="526.6" stroke="#333" stroke-width="0.5"/>
<line x1="317.1" y1="524.6" x2="317.1" y2="526.6" stroke="#333" stroke-width="0.5"/>
<line x1="320.3" y1="524.6" x2="320.3" y2="527.6" stroke="#333" stroke-width="0.5"/>
<line x1="323.4" y1="524.6" x2="323.4" y2="526.6" stroke="#333" stroke-width="0.5"/>
<line x1="326.6" y1="524.6" x2="326.6" y2="526.6" stroke="#333" stroke-width="0.5"/>
<line x1="329.8" y1="524.6" x2="329.8" y2="526.6" stroke="#333" stroke-width="0.5"/>
<line x1="333.0" y1="524.6" x2="333.0" y2="526.6" stroke="#333" stroke-width="0.5"/>
<line x1="336.1" y1="524.6" x2="336.1" y2="527.6" stroke="#333" stroke-width="0.5"/>
<line x1="339.3" y1="524.6" x2="339.3" y2="526.6" stroke="#333" stroke-width="0.5"/>
<line x1="342.5" y1="524.6" x2="342.5" y2="526.6" stroke="#333" stroke-width="0.5"/>
<line x1="345.7" y1="524.6" x2="345.7" y2="526.6" stroke="#333" stroke-width="0.5"/>
<line x1="348.8" y1="524.6" x2="348.8" y2="526.6" stroke="#333" stroke-width="0.5"/>
<line x1="352.0" y1="524.6" x2="352.0" y2="527.6" stroke="#333" stroke-width="0.5"/>
<line x1="355.2" y1="524.6" x2="355.2" y2="526.6" stroke="#333" stroke-width="0.5"/>
<line x1="358.3" y1="524.6" x2="358.3" y2="526.6" stroke="#333" stroke-width="0.5"/>
<line x1="361.5" y1="524.6" x2="361.5" y2="526.6" stroke="#333" stroke-width="0.5"/>
<line x1="364.7" y1="524.6" x2="364.7" y2="526.6" stroke="#333" stroke-width="0.5"/>
<line x1="367.9" y1="524.6" x2="367.9" y2="527.6" stroke="#333" stroke-width="0.5"/>
<line x1="371.0" y1="524.6" x2="371.0" y2="526.6" stroke="#333" stroke-width="0.5"/>
<line x1="374.2" y1="524.6" x2="374.2" y2="526.6" stroke="#333" stroke-width="0.5"/>
<line x1="377.4" y1="524.6" x2="377.4" y2="526.6" stroke="#333" stroke-width="0.5"/>
<line x1="380.6" y1="524.6" x2="380.6" y2="526.6" stroke="#333" stroke-width="0.5"/>
<line x1="383.7" y1="524.6" x2="383.7" y2="527.6" stroke="#333" stroke-width="0.5"/>
<line x1="386.9" y1="524.6" x2="386.9" y2="526.6" stroke="#333" stroke-width="0.5"/>
<line x1="390.1" y1="524.6" x2="390.1" y2="526.6" stroke="#333" stroke-width="0.5"/>
<line x1="393.3" y1="524.6" x2="393.3" y2="526.6" stroke="#333" stroke-width="0.5"/>
<line x1="396.4" y1="524.6" x2="396.4" y2="526.6" stroke="#333" stroke-width="0.5"/>
<line x1="399.6" y1="524.6" x2="399.6" y2="527.6" stroke="#333" stroke-width="0.5"/>
<text x="304.4" y="531.8" class="sm" text-anchor="middle">-0.6</text>
<text x="320.3" y="531.8" class="sm" text-anchor="middle">-0.4</text>
<text x="336.1" y="531.8" class="sm" text-anchor="middle">-0.2</text>
<text x="352.0" y="531.8" class="sm" text-anchor="middle">0</text>
<text x="367.9" y="531.8" class="sm" text-anchor="middle">0.2</text>
<text x="383.7" y="531.8" class="sm" text-anchor="middle">0.4</text>
<text x="399.6" y="531.8" class="sm" text-anchor="middle">0.6</text>
<text x="352" y="538.8" class="sm" style="font-weight:bold" text-anchor="middle">Energy (eV)</text>
<text transform="translate(283.5,489) rotate(-90)" class="sm" style="font-weight:bold" text-anchor="middle">Cross Section (1.e-16cm^2)</text></svg>
</div>
</body></html>
